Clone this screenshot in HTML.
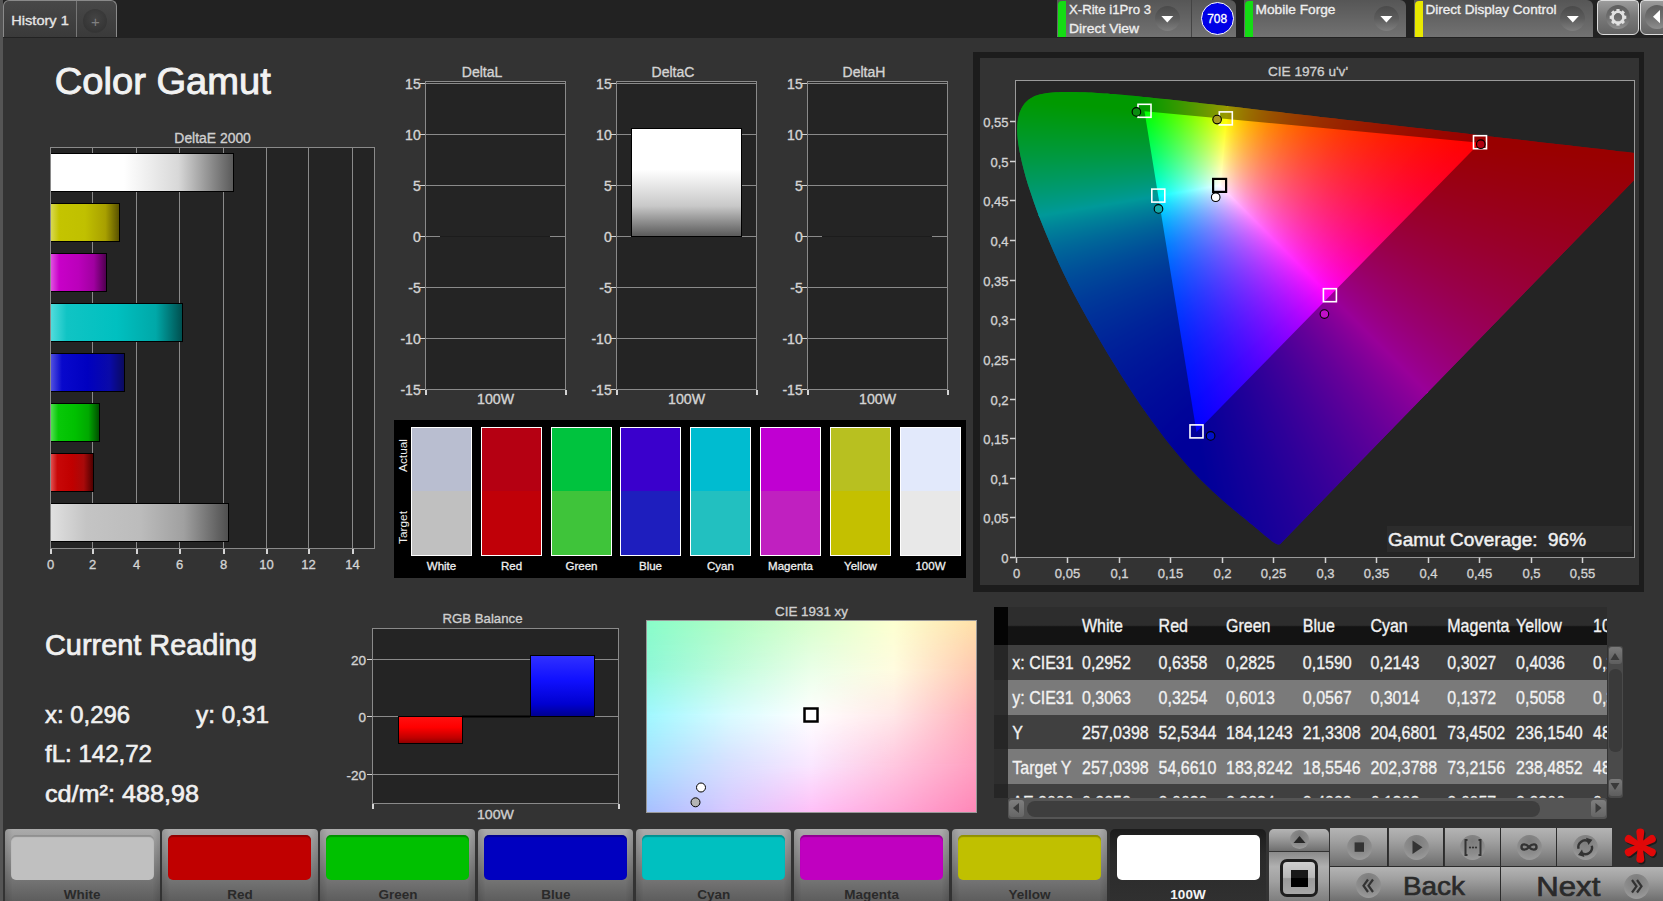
<!DOCTYPE html><html><head><meta charset="utf-8"><title>Color Gamut</title><style>html,body{margin:0;padding:0;width:1663px;height:901px;overflow:hidden;background:#333;}body{position:relative;font-family:"Liberation Sans",sans-serif;}svg text{font-family:"Liberation Sans",sans-serif;}</style></head><body><div style="position:absolute;left:0px;top:0px;width:1663px;height:38px;background:#222;"></div>
<div style="position:absolute;left:0px;top:38px;width:1663px;height:863px;background:#333;"></div>
<div style="position:absolute;left:0px;top:0px;width:3px;height:901px;background:#555;"></div>
<div style="position:absolute;left:3px;top:0px;width:114px;height:37px;background:linear-gradient(#484848,#3a3a3a);border:1px solid #8a8a8a;border-bottom:none;border-radius:6px 6px 0 0;box-sizing:border-box;"></div>
<div style="position:absolute;left:76px;top:1px;width:1px;height:36px;background:#777;"></div>
<div style="position:absolute;left:83px;top:9px;width:24px;height:24px;border-radius:50%;background:radial-gradient(circle at 50% 40%,#444,#353535 70%,#3a3a3a);"></div>
<div style="position:absolute;left:1057px;top:0px;width:179px;height:37px;background:linear-gradient(#565656,#727272);border-radius:0 6px 0 0;"></div>
<div style="position:absolute;left:1057.8px;top:1px;width:8px;height:36px;background:#14dc14;border-radius:4px 0 0 0;"></div>
<div style="position:absolute;left:1154.8px;top:5.5px;width:25px;height:25px;border-radius:50%;background:linear-gradient(#4a4a4a,#5c5c5c 50%,#7e7e7e);"></div>
<div style="position:absolute;left:1191px;top:0px;width:1px;height:37px;background:#444;"></div>
<div style="position:absolute;left:1200.5px;top:2px;width:33px;height:33px;border-radius:50%;background:#0000e6;border:1.5px solid #fff;box-sizing:border-box;"></div>
<div style="position:absolute;left:1244px;top:0px;width:162px;height:37px;background:linear-gradient(#565656,#727272);border-radius:0 6px 0 0;"></div>
<div style="position:absolute;left:1244.8px;top:1px;width:8px;height:36px;background:#14dc14;border-radius:4px 0 0 0;"></div>
<div style="position:absolute;left:1373.9px;top:5.5px;width:25px;height:25px;border-radius:50%;background:linear-gradient(#4a4a4a,#5c5c5c 50%,#7e7e7e);"></div>
<div style="position:absolute;left:1414px;top:0px;width:179px;height:37px;background:linear-gradient(#565656,#727272);border-radius:0 6px 0 0;"></div>
<div style="position:absolute;left:1414.8px;top:1px;width:8px;height:36px;background:#e8e800;border-radius:4px 0 0 0;"></div>
<div style="position:absolute;left:1560.3px;top:5.5px;width:25px;height:25px;border-radius:50%;background:linear-gradient(#4a4a4a,#5c5c5c 50%,#7e7e7e);"></div>
<div style="position:absolute;left:1597px;top:0px;width:42px;height:35px;background:linear-gradient(#9c9c9c 0%,#7a7a7a 45%,#646464 100%);border:1.5px solid #dcdcdc;box-sizing:border-box;border-radius:4px 4px 6px 6px;"></div>
<div style="position:absolute;left:1640px;top:0px;width:26px;height:35px;background:linear-gradient(#9c9c9c 0%,#7a7a7a 45%,#646464 100%);border:1.5px solid #dcdcdc;box-sizing:border-box;border-radius:4px 0 0 6px;"></div>
<div style="position:absolute;left:1606px;top:5.3px;width:24px;height:24px;border-radius:50%;background:linear-gradient(#5e5e5e,#6e6e6e 50%,#8e8e8e);"></div>
<div style="position:absolute;left:1644.7px;top:5.3px;width:24px;height:24px;border-radius:50%;background:linear-gradient(#5e5e5e,#6e6e6e 50%,#8e8e8e);"></div>
<div style="position:absolute;left:50px;top:147px;width:325px;height:402px;background:#242424;border:1px solid #8a8a8a;box-sizing:border-box;"></div>
<div style="position:absolute;left:50px;top:549px;width:1.6px;height:5px;background:#d4d4d4;"></div>
<div style="position:absolute;left:92px;top:147px;width:1px;height:402px;background:#8a8a8a;"></div>
<div style="position:absolute;left:92px;top:549px;width:1.6px;height:5px;background:#d4d4d4;"></div>
<div style="position:absolute;left:136px;top:147px;width:1px;height:402px;background:#8a8a8a;"></div>
<div style="position:absolute;left:136px;top:549px;width:1.6px;height:5px;background:#d4d4d4;"></div>
<div style="position:absolute;left:179px;top:147px;width:1px;height:402px;background:#8a8a8a;"></div>
<div style="position:absolute;left:179px;top:549px;width:1.6px;height:5px;background:#d4d4d4;"></div>
<div style="position:absolute;left:223px;top:147px;width:1px;height:402px;background:#8a8a8a;"></div>
<div style="position:absolute;left:223px;top:549px;width:1.6px;height:5px;background:#d4d4d4;"></div>
<div style="position:absolute;left:266px;top:147px;width:1px;height:402px;background:#8a8a8a;"></div>
<div style="position:absolute;left:266px;top:549px;width:1.6px;height:5px;background:#d4d4d4;"></div>
<div style="position:absolute;left:308px;top:147px;width:1px;height:402px;background:#8a8a8a;"></div>
<div style="position:absolute;left:308px;top:549px;width:1.6px;height:5px;background:#d4d4d4;"></div>
<div style="position:absolute;left:352px;top:147px;width:1px;height:402px;background:#8a8a8a;"></div>
<div style="position:absolute;left:352px;top:549px;width:1.6px;height:5px;background:#d4d4d4;"></div>
<div style="position:absolute;left:51px;top:153.2px;width:183.4px;height:38.5px;background:linear-gradient(90deg,#fff 0%,#fff 40%,#d8d8d8 70%,#5a5a5a 100%);border:1px solid #000;border-left:none;box-sizing:border-box;"></div>
<div style="position:absolute;left:51px;top:203.2px;width:69.4px;height:38.5px;background:linear-gradient(90deg,#d8d850 0%,#c4c400 12%,#c0c000 50%,#a8a000 80%,#5a5200 100%);border:1px solid #000;border-left:none;box-sizing:border-box;"></div>
<div style="position:absolute;left:51px;top:253.2px;width:55.5px;height:38.5px;background:linear-gradient(90deg,#e050e0 0%,#c800c8 15%,#bb00bb 50%,#a000a0 78%,#500050 100%);border:1px solid #000;border-left:none;box-sizing:border-box;"></div>
<div style="position:absolute;left:51px;top:303.2px;width:132.2px;height:38.5px;background:linear-gradient(90deg,#50dcdc 0%,#10c4c4 12%,#00c0c0 50%,#00a8a8 80%,#005050 100%);border:1px solid #000;border-left:none;box-sizing:border-box;"></div>
<div style="position:absolute;left:51px;top:353.2px;width:73.6px;height:38.5px;background:linear-gradient(90deg,#5050e0 0%,#0808cc 15%,#0000c0 50%,#0a0aa8 80%,#0a0a60 100%);border:1px solid #000;border-left:none;box-sizing:border-box;"></div>
<div style="position:absolute;left:51px;top:403.2px;width:49.099999999999994px;height:38.5px;background:linear-gradient(90deg,#50e050 0%,#08c808 15%,#00c000 50%,#00a800 78%,#005000 100%);border:1px solid #000;border-left:none;box-sizing:border-box;"></div>
<div style="position:absolute;left:51px;top:453.2px;width:43.3px;height:38.5px;background:linear-gradient(90deg,#e05050 0%,#c80808 15%,#c00000 50%,#a80a0a 78%,#500000 100%);border:1px solid #000;border-left:none;box-sizing:border-box;"></div>
<div style="position:absolute;left:51px;top:503.2px;width:178.0px;height:38.5px;background:linear-gradient(90deg,#e0e0e0 0%,#c4c4c4 20%,#bcbcbc 50%,#a0a0a0 75%,#505050 100%);border:1px solid #000;border-left:none;box-sizing:border-box;"></div>
<div style="position:absolute;left:425px;top:81px;width:141px;height:309px;background:#242424;border:1px solid #8a8a8a;box-sizing:border-box;"></div>
<div style="position:absolute;left:425px;top:83px;width:140px;height:1px;background:#8a8a8a;"></div>
<div style="position:absolute;left:420px;top:82.7px;width:5px;height:1.6px;background:#d4d4d4;"></div>
<div style="position:absolute;left:425px;top:134px;width:140px;height:1px;background:#8a8a8a;"></div>
<div style="position:absolute;left:420px;top:133.7px;width:5px;height:1.6px;background:#d4d4d4;"></div>
<div style="position:absolute;left:425px;top:185px;width:140px;height:1px;background:#8a8a8a;"></div>
<div style="position:absolute;left:420px;top:184.7px;width:5px;height:1.6px;background:#d4d4d4;"></div>
<div style="position:absolute;left:425px;top:236px;width:140px;height:1px;background:#8a8a8a;"></div>
<div style="position:absolute;left:420px;top:235.7px;width:5px;height:1.6px;background:#d4d4d4;"></div>
<div style="position:absolute;left:425px;top:287px;width:140px;height:1px;background:#8a8a8a;"></div>
<div style="position:absolute;left:420px;top:286.7px;width:5px;height:1.6px;background:#d4d4d4;"></div>
<div style="position:absolute;left:425px;top:338px;width:140px;height:1px;background:#8a8a8a;"></div>
<div style="position:absolute;left:420px;top:337.7px;width:5px;height:1.6px;background:#d4d4d4;"></div>
<div style="position:absolute;left:420px;top:388.7px;width:5px;height:1.6px;background:#d4d4d4;"></div>
<div style="position:absolute;left:425px;top:390px;width:1.6px;height:5px;background:#d4d4d4;"></div>
<div style="position:absolute;left:565px;top:390px;width:1.6px;height:5px;background:#d4d4d4;"></div>
<div style="position:absolute;left:440px;top:236px;width:110px;height:1.3px;background:#1c1c1c;"></div>
<div style="position:absolute;left:616px;top:81px;width:141px;height:309px;background:#242424;border:1px solid #8a8a8a;box-sizing:border-box;"></div>
<div style="position:absolute;left:616px;top:83px;width:140px;height:1px;background:#8a8a8a;"></div>
<div style="position:absolute;left:611px;top:82.7px;width:5px;height:1.6px;background:#d4d4d4;"></div>
<div style="position:absolute;left:616px;top:134px;width:140px;height:1px;background:#8a8a8a;"></div>
<div style="position:absolute;left:611px;top:133.7px;width:5px;height:1.6px;background:#d4d4d4;"></div>
<div style="position:absolute;left:616px;top:185px;width:140px;height:1px;background:#8a8a8a;"></div>
<div style="position:absolute;left:611px;top:184.7px;width:5px;height:1.6px;background:#d4d4d4;"></div>
<div style="position:absolute;left:616px;top:236px;width:140px;height:1px;background:#8a8a8a;"></div>
<div style="position:absolute;left:611px;top:235.7px;width:5px;height:1.6px;background:#d4d4d4;"></div>
<div style="position:absolute;left:616px;top:287px;width:140px;height:1px;background:#8a8a8a;"></div>
<div style="position:absolute;left:611px;top:286.7px;width:5px;height:1.6px;background:#d4d4d4;"></div>
<div style="position:absolute;left:616px;top:338px;width:140px;height:1px;background:#8a8a8a;"></div>
<div style="position:absolute;left:611px;top:337.7px;width:5px;height:1.6px;background:#d4d4d4;"></div>
<div style="position:absolute;left:611px;top:388.7px;width:5px;height:1.6px;background:#d4d4d4;"></div>
<div style="position:absolute;left:616px;top:390px;width:1.6px;height:5px;background:#d4d4d4;"></div>
<div style="position:absolute;left:756px;top:390px;width:1.6px;height:5px;background:#d4d4d4;"></div>
<div style="position:absolute;left:630.5px;top:128px;width:111.5px;height:109px;background:linear-gradient(#fff 0%,#fff 38%,#c8c8c8 72%,#5a5a5a 100%);border:1.8px solid #000;box-sizing:border-box;"></div>
<div style="position:absolute;left:807px;top:81px;width:141px;height:309px;background:#242424;border:1px solid #8a8a8a;box-sizing:border-box;"></div>
<div style="position:absolute;left:807px;top:83px;width:140px;height:1px;background:#8a8a8a;"></div>
<div style="position:absolute;left:802px;top:82.7px;width:5px;height:1.6px;background:#d4d4d4;"></div>
<div style="position:absolute;left:807px;top:134px;width:140px;height:1px;background:#8a8a8a;"></div>
<div style="position:absolute;left:802px;top:133.7px;width:5px;height:1.6px;background:#d4d4d4;"></div>
<div style="position:absolute;left:807px;top:185px;width:140px;height:1px;background:#8a8a8a;"></div>
<div style="position:absolute;left:802px;top:184.7px;width:5px;height:1.6px;background:#d4d4d4;"></div>
<div style="position:absolute;left:807px;top:236px;width:140px;height:1px;background:#8a8a8a;"></div>
<div style="position:absolute;left:802px;top:235.7px;width:5px;height:1.6px;background:#d4d4d4;"></div>
<div style="position:absolute;left:807px;top:287px;width:140px;height:1px;background:#8a8a8a;"></div>
<div style="position:absolute;left:802px;top:286.7px;width:5px;height:1.6px;background:#d4d4d4;"></div>
<div style="position:absolute;left:807px;top:338px;width:140px;height:1px;background:#8a8a8a;"></div>
<div style="position:absolute;left:802px;top:337.7px;width:5px;height:1.6px;background:#d4d4d4;"></div>
<div style="position:absolute;left:802px;top:388.7px;width:5px;height:1.6px;background:#d4d4d4;"></div>
<div style="position:absolute;left:807px;top:390px;width:1.6px;height:5px;background:#d4d4d4;"></div>
<div style="position:absolute;left:947px;top:390px;width:1.6px;height:5px;background:#d4d4d4;"></div>
<div style="position:absolute;left:822px;top:236px;width:110px;height:1.3px;background:#1c1c1c;"></div>
<div style="position:absolute;left:394px;top:420px;width:572px;height:158px;background:#000;"></div>
<div style="position:absolute;left:411px;top:427px;width:61px;height:129px;border:1.5px solid #fff;box-sizing:border-box;background:linear-gradient(#b9bed0 0%,#b9bed0 50%,#c0c0c0 50%,#c0c0c0 100%);"></div>
<div style="position:absolute;left:481px;top:427px;width:61px;height:129px;border:1.5px solid #fff;box-sizing:border-box;background:linear-gradient(#b50012 0%,#b50012 50%,#c00008 50%,#c00008 100%);"></div>
<div style="position:absolute;left:551px;top:427px;width:61px;height:129px;border:1.5px solid #fff;box-sizing:border-box;background:linear-gradient(#00c33e 0%,#00c33e 50%,#3fc43a 50%,#3fc43a 100%);"></div>
<div style="position:absolute;left:620px;top:427px;width:61px;height:129px;border:1.5px solid #fff;box-sizing:border-box;background:linear-gradient(#3a00cc 0%,#3a00cc 50%,#1e1ebe 50%,#1e1ebe 100%);"></div>
<div style="position:absolute;left:690px;top:427px;width:61px;height:129px;border:1.5px solid #fff;box-sizing:border-box;background:linear-gradient(#00bcd0 0%,#00bcd0 50%,#22c0c0 50%,#22c0c0 100%);"></div>
<div style="position:absolute;left:760px;top:427px;width:61px;height:129px;border:1.5px solid #fff;box-sizing:border-box;background:linear-gradient(#c000d2 0%,#c000d2 50%,#c020c0 50%,#c020c0 100%);"></div>
<div style="position:absolute;left:830px;top:427px;width:61px;height:129px;border:1.5px solid #fff;box-sizing:border-box;background:linear-gradient(#b8c020 0%,#b8c020 50%,#c4c000 50%,#c4c000 100%);"></div>
<div style="position:absolute;left:900px;top:427px;width:61px;height:129px;border:1.5px solid #fff;box-sizing:border-box;background:linear-gradient(#e2e9fb 0%,#e2e9fb 50%,#e8e8e8 50%,#e8e8e8 100%);"></div>
<div style="position:absolute;left:973px;top:52px;width:671px;height:540px;background:#1c1c1c;"></div>
<div style="position:absolute;left:979.5px;top:58px;width:659px;height:527px;background:#333;"></div>
<div style="position:absolute;left:1015px;top:80px;width:620px;height:478px;background:#242424;"></div>
<div style="position:absolute;left:1015px;top:80px;width:620px;height:478px;overflow:hidden;"><div style="position:absolute;left:0;top:0;width:620px;height:478px;clip-path:polygon(265.3px 463.9px,265.3px 463.9px,265.2px 463.9px,265.1px 464.0px,265.0px 464.1px,264.9px 464.1px,264.8px 464.2px,264.7px 464.2px,264.5px 464.3px,264.4px 464.3px,264.2px 464.4px,264.0px 464.4px,263.8px 464.4px,263.6px 464.4px,263.3px 464.4px,263.0px 464.4px,262.6px 464.3px,262.1px 464.2px,261.6px 464.0px,261.1px 463.8px,260.6px 463.6px,260.1px 463.3px,259.6px 463.0px,259.1px 462.7px,258.5px 462.3px,257.9px 461.8px,257.3px 461.4px,256.6px 460.9px,255.9px 460.3px,255.1px 459.7px,254.3px 459.1px,253.4px 458.3px,252.4px 457.6px,251.4px 456.7px,250.2px 455.8px,249.1px 454.9px,247.9px 453.8px,246.7px 452.8px,245.3px 451.7px,244.0px 450.5px,242.5px 449.3px,241.0px 448.0px,239.5px 446.7px,237.8px 445.3px,236.1px 443.9px,234.2px 442.4px,232.3px 440.8px,230.2px 439.1px,228.0px 437.3px,225.7px 435.4px,223.3px 433.5px,220.9px 431.5px,218.4px 429.4px,215.8px 427.2px,213.1px 425.0px,210.2px 422.5px,207.3px 419.9px,204.2px 417.2px,201.0px 414.3px,197.6px 411.3px,194.2px 408.0px,190.6px 404.5px,187.0px 401.0px,183.2px 397.2px,179.2px 393.0px,174.8px 388.3px,170.2px 383.0px,165.3px 377.3px,160.1px 371.1px,154.7px 364.5px,149.2px 357.4px,143.5px 349.8px,137.5px 341.8px,131.4px 333.3px,125.2px 324.4px,118.9px 315.1px,112.5px 305.3px,105.9px 294.9px,99.3px 284.3px,92.6px 273.4px,86.1px 262.4px,79.6px 251.2px,73.0px 239.8px,66.6px 228.3px,60.4px 216.8px,54.5px 205.5px,49.0px 194.2px,43.7px 183.0px,38.8px 171.9px,34.1px 161.1px,29.8px 150.8px,25.8px 140.8px,22.1px 131.2px,18.8px 121.9px,15.8px 113.0px,13.0px 104.7px,10.7px 96.9px,8.7px 89.6px,7.0px 82.8px,5.6px 76.4px,4.4px 70.4px,3.5px 64.9px,2.8px 59.8px,2.4px 55.1px,2.2px 50.7px,2.3px 46.6px,2.5px 42.7px,3.0px 39.2px,3.7px 36.0px,4.5px 33.0px,5.6px 30.2px,6.8px 27.7px,8.2px 25.4px,9.8px 23.3px,11.6px 21.5px,13.5px 19.8px,15.4px 18.4px,17.6px 17.2px,19.8px 16.1px,22.2px 15.3px,24.6px 14.5px,27.1px 13.9px,29.7px 13.4px,32.4px 13.1px,35.1px 12.8px,37.9px 12.5px,40.7px 12.3px,43.6px 12.2px,46.5px 12.1px,49.4px 12.1px,52.4px 12.1px,55.3px 12.0px,58.2px 12.1px,61.1px 12.1px,64.1px 12.2px,67.1px 12.2px,70.1px 12.3px,73.1px 12.5px,76.2px 12.6px,79.2px 12.8px,82.4px 13.0px,85.6px 13.2px,88.9px 13.4px,92.2px 13.6px,95.5px 13.9px,98.9px 14.1px,102.4px 14.4px,105.9px 14.7px,109.5px 15.1px,113.2px 15.4px,116.9px 15.8px,120.7px 16.1px,124.5px 16.5px,128.5px 16.9px,132.5px 17.3px,136.6px 17.8px,140.8px 18.2px,145.1px 18.7px,149.5px 19.1px,153.9px 19.6px,158.5px 20.1px,163.1px 20.6px,167.9px 21.1px,172.7px 21.7px,177.6px 22.2px,182.7px 22.8px,187.8px 23.4px,193.1px 24.0px,198.4px 24.6px,203.9px 25.2px,209.5px 25.8px,215.1px 26.5px,220.9px 27.1px,226.8px 27.8px,232.8px 28.5px,238.9px 29.2px,245.1px 29.9px,251.4px 30.7px,257.9px 31.4px,264.4px 32.1px,271.0px 32.9px,277.7px 33.7px,284.6px 34.5px,291.5px 35.3px,298.5px 36.1px,305.6px 36.9px,312.8px 37.7px,320.1px 38.5px,327.5px 39.4px,334.9px 40.2px,342.3px 41.1px,349.8px 42.0px,357.3px 42.8px,364.9px 43.7px,372.4px 44.6px,379.9px 45.4px,386.8px 46.2px,393.1px 47.0px,399.6px 47.7px,407.1px 48.6px,416.4px 49.6px,428.2px 51.0px,441.9px 52.6px,456.6px 54.2px,471.0px 55.9px,484.0px 57.4px,495.8px 58.7px,506.9px 60.0px,517.4px 61.2px,527.4px 62.4px,536.7px 63.5px,545.3px 64.4px,553.2px 65.3px,560.5px 66.2px,567.4px 67.0px,574.0px 67.7px,580.3px 68.5px,586.1px 69.1px,591.5px 69.8px,596.6px 70.3px,601.3px 70.9px,605.4px 71.4px,608.9px 71.8px,612.2px 72.1px,615.5px 72.5px,619.3px 72.9px,624.0px 73.5px,629.5px 74.1px,634.9px 74.7px,639.6px 75.3px,642.9px 75.7px);"><div style="position:absolute;left:0;top:0;width:620px;height:478px;clip-path:polygon(213.5px -2.0px,622.0px -2.0px,622.0px 480.0px,579.0px 480.0px,203.3px 106.4px);background:conic-gradient(from 3.58deg at 181.5px 351.9px,rgb(0,255,0) 0.00deg,rgb(0,255,0) 0.41deg,rgb(0,255,0) 0.81deg,rgb(0,255,0) 1.22deg,rgb(0,255,0) 1.62deg,rgb(0,249,0) 2.03deg,rgb(0,241,0) 2.43deg,rgb(0,233,0) 2.84deg,rgb(0,225,0) 3.24deg,rgb(0,217,0) 3.65deg,rgb(0,210,0) 4.05deg,rgb(0,204,0) 4.46deg,rgb(0,197,0) 4.86deg,rgb(0,191,0) 5.27deg,rgb(0,185,0) 5.67deg,rgb(0,179,0) 6.08deg,rgb(0,174,0) 6.49deg,rgb(0,169,0) 6.89deg,rgb(0,164,0) 7.30deg,rgb(0,159,0) 7.70deg,rgb(0,154,0) 8.11deg,rgb(0,150,0) 8.51deg,rgb(0,146,0) 8.92deg,rgb(0,141,0) 9.32deg,rgb(0,137,0) 9.73deg,rgb(0,133,0) 10.13deg,rgb(0,130,0) 10.54deg,rgb(0,126,0) 10.94deg,rgb(0,123,0) 11.35deg,rgb(0,119,0) 11.75deg,rgb(0,116,0) 12.16deg,rgb(0,113,0) 12.57deg,rgb(0,109,0) 12.97deg,rgb(0,106,0) 13.38deg,rgb(0,104,0) 13.78deg,rgb(0,101,0) 14.19deg,rgb(0,98,0) 14.59deg,rgb(0,95,0) 15.00deg,rgb(0,93,0) 15.40deg,rgb(0,90,0) 15.81deg,rgb(0,88,0) 16.21deg,rgb(0,85,0) 16.62deg,rgb(0,83,0) 17.02deg,rgb(0,80,0) 17.43deg,rgb(0,78,0) 17.83deg,rgb(0,76,0) 18.24deg,rgb(0,74,0) 18.64deg,rgb(0,72,0) 19.05deg,rgb(0,70,0) 19.46deg,rgb(0,68,0) 19.86deg,rgb(0,66,0) 20.27deg,rgb(0,64,0) 20.67deg,rgb(0,62,0) 21.08deg,rgb(0,60,0) 21.48deg,rgb(0,58,0) 21.89deg,rgb(0,56,0) 22.29deg,rgb(0,55,0) 22.70deg,rgb(0,53,0) 23.10deg,rgb(0,51,0) 23.51deg,rgb(0,50,0) 23.91deg,rgb(0,48,0) 24.32deg,rgb(0,46,0) 24.72deg,rgb(0,45,0) 25.13deg,rgb(0,43,0) 25.54deg,rgb(0,42,0) 25.94deg,rgb(0,40,0) 26.35deg,rgb(0,39,0) 26.75deg,rgb(0,38,0) 27.16deg,rgb(0,36,0) 27.56deg,rgb(0,35,0) 27.97deg,rgb(0,33,0) 28.37deg,rgb(0,32,0) 28.78deg,rgb(0,31,0) 29.18deg,rgb(0,30,0) 29.59deg,rgb(0,28,0) 29.99deg,rgb(0,27,0) 30.40deg,rgb(0,26,0) 30.80deg,rgb(0,25,0) 31.21deg,rgb(0,23,0) 31.62deg,rgb(0,22,0) 32.02deg,rgb(0,21,0) 32.43deg,rgb(0,20,0) 32.83deg,rgb(0,19,0) 33.24deg,rgb(0,18,0) 33.64deg,rgb(0,17,0) 34.05deg,rgb(0,15,0) 34.45deg,rgb(0,14,0) 34.86deg,rgb(0,13,0) 35.26deg,rgb(0,12,0) 35.67deg,rgb(0,11,0) 36.07deg,rgb(0,10,0) 36.48deg,rgb(0,9,0) 36.88deg,rgb(0,8,0) 37.29deg,rgb(0,7,0) 37.70deg,rgb(0,6,0) 38.10deg,rgb(0,5,0) 38.51deg,rgb(0,4,0) 38.91deg,rgb(0,3,0) 39.32deg,rgb(0,3,0) 39.72deg,rgb(0,2,0) 40.13deg,rgb(0,1,0) 40.53deg,rgb(0,0,0) 40.94deg,rgb(0,0,0) 41.34deg,rgb(0,0,0) 41.75deg,rgb(0,0,0) 42.15deg,rgb(0,0,0) 42.56deg,rgb(0,0,0) 42.96deg,rgb(0,0,0) 43.37deg,rgb(0,0,0) 43.77deg,rgb(0,0,0) 44.18deg,rgb(0,0,0) 44.59deg,rgb(0,0,0) 44.99deg,rgb(0,0,0) 45.40deg,rgb(0,0,0) 45.80deg,rgb(0,0,0) 46.21deg,rgb(0,0,0) 46.61deg,rgb(0,0,0) 47.02deg,rgb(0,0,0) 47.42deg,rgb(0,0,0) 47.83deg,rgb(0,0,0) 48.23deg,rgb(0,0,0) 48.64deg,rgb(0,0,0) 49.04deg,rgb(0,0,0) 49.45deg,rgb(0,0,0) 49.85deg,rgb(0,0,0) 50.26deg,rgb(0,0,0) 50.67deg,rgb(0,0,0) 51.07deg,rgb(0,0,0) 51.48deg,rgb(0,0,0) 51.88deg,rgb(0,0,0) 52.29deg,rgb(0,0,0) 52.69deg,rgb(0,0,0) 53.10deg,rgb(0,0,0) 53.50deg,rgb(0,0,0) 53.91deg,rgb(0,0,0) 54.31deg,rgb(0,0,0) 54.72deg,rgb(0,0,0) 55.12deg,rgb(0,0,0) 55.53deg,rgb(0,0,0) 55.93deg,rgb(0,0,0) 56.34deg,rgb(0,0,0) 56.75deg,rgb(0,0,0) 57.15deg,rgb(0,0,0) 57.56deg,rgb(0,0,0) 57.96deg,rgb(0,0,0) 58.37deg,rgb(0,0,0) 58.77deg,rgb(0,0,0) 59.18deg,rgb(0,0,0) 59.58deg,rgb(0,0,0) 59.99deg,rgb(0,0,0) 60.39deg,rgb(0,0,0) 60.80deg,rgb(0,0,0) 61.20deg,rgb(0,0,0) 61.61deg,rgb(0,0,0) 62.01deg,rgb(0,0,0) 62.42deg,rgb(0,0,0) 62.83deg,rgb(0,0,0) 63.23deg,rgb(0,0,0) 63.64deg,rgb(0,0,0) 64.04deg,rgb(0,0,0) 64.45deg,rgb(0,0,0) 64.85deg,rgb(0,0,0) 65.26deg,rgb(0,0,0) 65.66deg,rgb(0,0,0) 66.07deg,rgb(0,0,0) 66.47deg,rgb(0,0,0) 66.88deg,rgb(0,0,0) 67.28deg,rgb(0,0,0) 67.69deg,rgb(0,0,0) 68.09deg,rgb(0,0,0) 68.50deg,rgb(0,0,0) 68.91deg,rgb(0,0,0) 69.31deg,rgb(0,0,0) 69.72deg,rgb(0,0,0) 70.12deg,rgb(0,0,0) 70.53deg,rgb(0,0,0) 70.93deg,rgb(0,0,0) 71.34deg,rgb(0,0,0) 71.74deg,rgb(0,0,0) 72.15deg,rgb(0,0,0) 72.55deg,rgb(0,0,0) 72.96deg,rgb(0,0,0) 73.36deg,rgb(0,0,0) 73.77deg,rgb(0,0,0) 74.17deg,rgb(0,0,0) 74.58deg,rgb(0,0,0) 74.98deg,rgb(0,0,0) 75.39deg,rgb(0,0,0) 75.80deg,rgb(0,0,0) 76.20deg,rgb(0,0,0) 76.61deg,rgb(0,0,0) 77.01deg,rgb(0,0,0) 77.42deg,rgb(0,0,0) 77.82deg,rgb(0,0,0) 78.23deg,rgb(0,0,0) 78.63deg,rgb(0,0,0) 79.04deg,rgb(0,0,0) 79.44deg,rgb(0,0,0) 79.85deg,rgb(0,0,0) 80.25deg,rgb(0,0,0) 80.66deg,rgb(0,0,0) 81.06deg,rgb(0,0,0) 81.47deg,rgb(0,0,0) 81.88deg,rgb(0,0,0) 82.28deg,rgb(0,0,0) 82.69deg,rgb(0,0,0) 83.09deg,rgb(0,0,0) 83.50deg,rgb(0,0,0) 83.90deg,rgb(0,0,0) 84.31deg,rgb(0,0,0) 84.71deg,rgb(0,0,0) 85.12deg,rgb(0,0,0) 85.52deg,rgb(0,0,0) 85.93deg,rgb(0,0,0) 86.33deg,rgb(0,0,0) 86.74deg,rgb(0,0,0) 87.14deg,rgb(0,0,0) 87.55deg,rgb(0,0,0) 87.96deg,rgb(0,0,0) 88.36deg,rgb(0,0,0) 88.77deg,rgb(0,0,0) 89.17deg,rgb(0,0,0) 89.58deg,rgb(0,0,0) 89.98deg,rgb(0,0,0) 90.39deg,rgb(0,0,0) 90.79deg,rgb(0,0,0) 91.20deg,rgb(0,0,0) 91.60deg,rgb(0,0,0) 92.01deg,rgb(0,0,0) 92.41deg,rgb(0,0,0) 92.82deg,rgb(0,0,0) 93.22deg,rgb(0,0,0) 93.63deg,rgb(0,0,0) 94.04deg,rgb(0,0,0) 94.44deg,rgb(0,0,0) 94.85deg,rgb(0,0,0) 95.25deg,rgb(0,0,0) 95.66deg,rgb(0,0,0) 96.06deg,rgb(0,0,0) 96.47deg,rgb(0,0,0) 96.87deg,rgb(0,0,0) 97.28deg,rgb(0,0,0) 97.68deg,rgb(0,0,0) 98.09deg,rgb(0,0,0) 98.49deg,rgb(0,0,0) 98.90deg,rgb(0,0,0) 99.30deg,rgb(0,0,0) 99.71deg,rgb(0,0,0) 100.12deg,rgb(0,0,0) 100.52deg,rgb(0,0,0) 100.93deg,rgb(0,0,0) 101.33deg,rgb(0,0,0) 101.74deg,rgb(0,0,0) 102.14deg,rgb(0,0,0) 102.55deg,rgb(0,0,0) 102.95deg,rgb(0,0,0) 103.36deg,rgb(0,0,0) 103.76deg,rgb(0,0,0) 104.17deg,rgb(0,0,0) 104.57deg,rgb(0,0,0) 104.98deg,rgb(0,0,0) 105.38deg,rgb(0,0,0) 105.79deg),conic-gradient(from 66.88deg at 129.5px 31.3px,rgb(0,0,0) 0.00deg,rgb(0,0,0) 0.34deg,rgb(0,0,0) 0.69deg,rgb(0,0,0) 1.03deg,rgb(0,0,0) 1.37deg,rgb(0,0,0) 1.72deg,rgb(0,0,0) 2.06deg,rgb(0,0,0) 2.41deg,rgb(0,0,0) 2.75deg,rgb(0,0,0) 3.09deg,rgb(0,0,0) 3.44deg,rgb(0,0,0) 3.78deg,rgb(0,0,0) 4.12deg,rgb(0,0,0) 4.47deg,rgb(0,0,0) 4.81deg,rgb(0,0,0) 5.16deg,rgb(0,0,0) 5.50deg,rgb(0,0,0) 5.84deg,rgb(0,0,0) 6.19deg,rgb(0,0,0) 6.53deg,rgb(0,0,0) 6.87deg,rgb(0,0,0) 7.22deg,rgb(0,0,0) 7.56deg,rgb(0,0,0) 7.91deg,rgb(0,0,0) 8.25deg,rgb(0,0,0) 8.59deg,rgb(0,0,0) 8.94deg,rgb(0,0,0) 9.28deg,rgb(0,0,0) 9.62deg,rgb(0,0,0) 9.97deg,rgb(0,0,0) 10.31deg,rgb(0,0,0) 10.66deg,rgb(0,0,0) 11.00deg,rgb(0,0,0) 11.34deg,rgb(0,0,0) 11.69deg,rgb(0,0,0) 12.03deg,rgb(0,0,0) 12.37deg,rgb(0,0,0) 12.72deg,rgb(0,0,0) 13.06deg,rgb(0,0,0) 13.41deg,rgb(0,0,0) 13.75deg,rgb(0,0,0) 14.09deg,rgb(0,0,0) 14.44deg,rgb(0,0,0) 14.78deg,rgb(0,0,0) 15.12deg,rgb(0,0,0) 15.47deg,rgb(0,0,0) 15.81deg,rgb(0,0,0) 16.16deg,rgb(0,0,0) 16.50deg,rgb(0,0,0) 16.84deg,rgb(0,0,0) 17.19deg,rgb(0,0,0) 17.53deg,rgb(0,0,0) 17.87deg,rgb(0,0,0) 18.22deg,rgb(0,0,0) 18.56deg,rgb(0,0,0) 18.91deg,rgb(0,0,0) 19.25deg,rgb(0,0,0) 19.59deg,rgb(0,0,0) 19.94deg,rgb(0,0,0) 20.28deg,rgb(0,0,0) 20.62deg,rgb(0,0,0) 20.97deg,rgb(0,0,0) 21.31deg,rgb(0,0,0) 21.66deg,rgb(0,0,0) 22.00deg,rgb(0,0,0) 22.34deg,rgb(0,0,0) 22.69deg,rgb(0,0,0) 23.03deg,rgb(0,0,0) 23.37deg,rgb(0,0,0) 23.72deg,rgb(0,0,0) 24.06deg,rgb(0,0,0) 24.41deg,rgb(0,0,0) 24.75deg,rgb(0,0,0) 25.09deg,rgb(0,0,0) 25.44deg,rgb(0,0,0) 25.78deg,rgb(0,0,0) 26.12deg,rgb(0,0,0) 26.47deg,rgb(0,0,0) 26.81deg,rgb(0,0,0) 27.16deg,rgb(0,0,0) 27.50deg,rgb(0,0,0) 27.84deg,rgb(0,0,0) 28.19deg,rgb(0,0,0) 28.53deg,rgb(0,0,2) 28.87deg,rgb(0,0,3) 29.22deg,rgb(0,0,5) 29.56deg,rgb(0,0,6) 29.91deg,rgb(0,0,8) 30.25deg,rgb(0,0,9) 30.59deg,rgb(0,0,11) 30.94deg,rgb(0,0,12) 31.28deg,rgb(0,0,14) 31.62deg,rgb(0,0,15) 31.97deg,rgb(0,0,17) 32.31deg,rgb(0,0,18) 32.66deg,rgb(0,0,20) 33.00deg,rgb(0,0,21) 33.34deg,rgb(0,0,23) 33.69deg,rgb(0,0,24) 34.03deg,rgb(0,0,26) 34.37deg,rgb(0,0,27) 34.72deg,rgb(0,0,29) 35.06deg,rgb(0,0,31) 35.41deg,rgb(0,0,32) 35.75deg,rgb(0,0,34) 36.09deg,rgb(0,0,35) 36.44deg,rgb(0,0,37) 36.78deg,rgb(0,0,39) 37.12deg,rgb(0,0,40) 37.47deg,rgb(0,0,42) 37.81deg,rgb(0,0,43) 38.16deg,rgb(0,0,45) 38.50deg,rgb(0,0,47) 38.84deg,rgb(0,0,48) 39.19deg,rgb(0,0,50) 39.53deg,rgb(0,0,52) 39.87deg,rgb(0,0,53) 40.22deg,rgb(0,0,55) 40.56deg,rgb(0,0,57) 40.91deg,rgb(0,0,59) 41.25deg,rgb(0,0,60) 41.59deg,rgb(0,0,62) 41.94deg,rgb(0,0,64) 42.28deg,rgb(0,0,66) 42.62deg,rgb(0,0,67) 42.97deg,rgb(0,0,69) 43.31deg,rgb(0,0,71) 43.66deg,rgb(0,0,73) 44.00deg,rgb(0,0,75) 44.34deg,rgb(0,0,76) 44.69deg,rgb(0,0,78) 45.03deg,rgb(0,0,80) 45.37deg,rgb(0,0,82) 45.72deg,rgb(0,0,84) 46.06deg,rgb(0,0,86) 46.41deg,rgb(0,0,88) 46.75deg,rgb(0,0,90) 47.09deg,rgb(0,0,92) 47.44deg,rgb(0,0,94) 47.78deg,rgb(0,0,96) 48.12deg,rgb(0,0,98) 48.47deg,rgb(0,0,100) 48.81deg,rgb(0,0,102) 49.16deg,rgb(0,0,104) 49.50deg,rgb(0,0,106) 49.84deg,rgb(0,0,108) 50.19deg,rgb(0,0,110) 50.53deg,rgb(0,0,112) 50.87deg,rgb(0,0,114) 51.22deg,rgb(0,0,117) 51.56deg,rgb(0,0,119) 51.91deg,rgb(0,0,121) 52.25deg,rgb(0,0,123) 52.59deg,rgb(0,0,125) 52.94deg,rgb(0,0,128) 53.28deg,rgb(0,0,130) 53.62deg,rgb(0,0,132) 53.97deg,rgb(0,0,135) 54.31deg,rgb(0,0,137) 54.66deg,rgb(0,0,139) 55.00deg,rgb(0,0,142) 55.34deg,rgb(0,0,144) 55.69deg,rgb(0,0,147) 56.03deg,rgb(0,0,149) 56.37deg,rgb(0,0,152) 56.72deg,rgb(0,0,154) 57.06deg,rgb(0,0,157) 57.41deg,rgb(0,0,160) 57.75deg,rgb(0,0,162) 58.09deg,rgb(0,0,165) 58.44deg,rgb(0,0,168) 58.78deg,rgb(0,0,170) 59.12deg,rgb(0,0,173) 59.47deg,rgb(0,0,176) 59.81deg,rgb(0,0,179) 60.16deg,rgb(0,0,182) 60.50deg,rgb(0,0,185) 60.84deg,rgb(0,0,187) 61.19deg,rgb(0,0,190) 61.53deg,rgb(0,0,193) 61.87deg,rgb(0,0,197) 62.22deg,rgb(0,0,200) 62.56deg,rgb(0,0,203) 62.90deg,rgb(0,0,206) 63.25deg,rgb(0,0,209) 63.59deg,rgb(0,0,213) 63.94deg,rgb(0,0,216) 64.28deg,rgb(0,0,219) 64.62deg,rgb(0,0,223) 64.97deg,rgb(0,0,226) 65.31deg,rgb(0,0,230) 65.65deg,rgb(0,0,233) 66.00deg,rgb(0,0,237) 66.34deg,rgb(0,0,241) 66.69deg,rgb(0,0,244) 67.03deg,rgb(0,0,248) 67.37deg,rgb(0,0,252) 67.72deg,rgb(0,0,255) 68.06deg,rgb(0,0,255) 68.40deg,rgb(0,0,255) 68.75deg,rgb(0,0,255) 69.09deg,rgb(0,0,255) 69.44deg,rgb(0,0,255) 69.78deg,rgb(0,0,255) 70.12deg),rgb(255,0,0);background-blend-mode:screen,screen;"></div><div style="position:absolute;left:0;top:0;width:620px;height:478px;clip-path:polygon(-2.0px -2.0px,215.9px -2.0px,205.7px 106.9px,-2.0px 141.4px);background:conic-gradient(from -42.59deg at 181.5px 351.9px,rgb(0,0,0) 0.00deg,rgb(0,0,0) 0.57deg,rgb(0,0,0) 1.14deg,rgb(0,0,0) 1.71deg,rgb(0,0,0) 2.29deg,rgb(0,0,0) 2.86deg,rgb(0,0,0) 3.43deg,rgb(0,0,0) 4.00deg,rgb(0,0,0) 4.57deg,rgb(0,0,0) 5.14deg,rgb(0,0,0) 5.72deg,rgb(0,0,0) 6.29deg,rgb(0,0,0) 6.86deg,rgb(0,0,0) 7.43deg,rgb(0,0,0) 8.00deg,rgb(0,0,0) 8.57deg,rgb(0,0,0) 9.14deg,rgb(0,0,0) 9.72deg,rgb(0,0,0) 10.29deg,rgb(0,0,0) 10.86deg,rgb(0,0,0) 11.43deg,rgb(0,0,0) 12.00deg,rgb(0,0,0) 12.57deg,rgb(0,0,0) 13.14deg,rgb(0,0,0) 13.72deg,rgb(0,0,0) 14.29deg,rgb(0,0,0) 14.86deg,rgb(0,0,0) 15.43deg,rgb(0,0,0) 16.00deg,rgb(0,0,0) 16.57deg,rgb(0,0,0) 17.15deg,rgb(0,0,0) 17.72deg,rgb(0,0,0) 18.29deg,rgb(0,0,0) 18.86deg,rgb(0,0,0) 19.43deg,rgb(0,0,0) 20.00deg,rgb(0,0,0) 20.57deg,rgb(0,0,0) 21.15deg,rgb(0,0,0) 21.72deg,rgb(0,0,0) 22.29deg,rgb(0,0,0) 22.86deg,rgb(0,0,0) 23.43deg,rgb(0,0,0) 24.00deg,rgb(0,0,0) 24.58deg,rgb(0,0,0) 25.15deg,rgb(0,0,0) 25.72deg,rgb(0,0,0) 26.29deg,rgb(0,0,0) 26.86deg,rgb(0,0,0) 27.43deg,rgb(0,0,0) 28.00deg,rgb(0,0,0) 28.58deg,rgb(0,0,0) 29.15deg,rgb(0,0,0) 29.72deg,rgb(0,0,0) 30.29deg,rgb(0,0,0) 30.86deg,rgb(0,0,0) 31.43deg,rgb(0,0,0) 32.00deg,rgb(0,0,0) 32.58deg,rgb(0,0,0) 33.15deg,rgb(5,0,0) 33.72deg,rgb(13,0,0) 34.29deg,rgb(21,0,0) 34.86deg,rgb(29,0,0) 35.43deg,rgb(38,0,0) 36.01deg,rgb(46,0,0) 36.58deg,rgb(55,0,0) 37.15deg,rgb(64,0,0) 37.72deg,rgb(73,0,0) 38.29deg,rgb(82,0,0) 38.86deg,rgb(91,0,0) 39.43deg,rgb(101,0,0) 40.01deg,rgb(111,0,0) 40.58deg,rgb(120,0,0) 41.15deg,rgb(130,0,0) 41.72deg,rgb(141,0,0) 42.29deg,rgb(151,0,0) 42.86deg,rgb(162,0,0) 43.43deg,rgb(173,0,0) 44.01deg,rgb(184,0,0) 44.58deg,rgb(195,0,0) 45.15deg,rgb(207,0,0) 45.72deg,rgb(219,0,0) 46.29deg,rgb(231,0,0) 46.86deg,rgb(244,0,0) 47.44deg,rgb(255,0,0) 48.01deg,rgb(255,0,0) 48.58deg,rgb(255,0,0) 49.15deg,rgb(255,0,0) 49.72deg),conic-gradient(from -101.18deg at 465.1px 62.7px,rgb(0,0,255) 0.00deg,rgb(0,0,255) 0.48deg,rgb(0,0,255) 0.96deg,rgb(0,0,255) 1.43deg,rgb(0,0,252) 1.91deg,rgb(0,0,241) 2.39deg,rgb(0,0,230) 2.87deg,rgb(0,0,220) 3.34deg,rgb(0,0,210) 3.82deg,rgb(0,0,200) 4.30deg,rgb(0,0,190) 4.78deg,rgb(0,0,181) 5.25deg,rgb(0,0,172) 5.73deg,rgb(0,0,162) 6.21deg,rgb(0,0,153) 6.69deg,rgb(0,0,145) 7.17deg,rgb(0,0,136) 7.64deg,rgb(0,0,128) 8.12deg,rgb(0,0,119) 8.60deg,rgb(0,0,111) 9.08deg,rgb(0,0,103) 9.55deg,rgb(0,0,95) 10.03deg,rgb(0,0,88) 10.51deg,rgb(0,0,80) 10.99deg,rgb(0,0,73) 11.46deg,rgb(0,0,65) 11.94deg,rgb(0,0,58) 12.42deg,rgb(0,0,51) 12.90deg,rgb(0,0,44) 13.37deg,rgb(0,0,37) 13.85deg,rgb(0,0,30) 14.33deg,rgb(0,0,23) 14.81deg,rgb(0,0,17) 15.29deg,rgb(0,0,10) 15.76deg,rgb(0,0,4) 16.24deg,rgb(0,0,0) 16.72deg,rgb(0,0,0) 17.20deg,rgb(0,0,0) 17.67deg,rgb(0,0,0) 18.15deg,rgb(0,0,0) 18.63deg,rgb(0,0,0) 19.11deg,rgb(0,0,0) 19.58deg,rgb(0,0,0) 20.06deg,rgb(0,0,0) 20.54deg,rgb(0,0,0) 21.02deg,rgb(0,0,0) 21.50deg,rgb(0,0,0) 21.97deg,rgb(0,0,0) 22.45deg,rgb(0,0,0) 22.93deg,rgb(0,0,0) 23.41deg,rgb(0,0,0) 23.88deg,rgb(0,0,0) 24.36deg,rgb(0,0,0) 24.84deg,rgb(0,0,0) 25.32deg,rgb(0,0,0) 25.79deg,rgb(0,0,0) 26.27deg,rgb(0,0,0) 26.75deg,rgb(0,0,0) 27.23deg),rgb(0,255,0);background-blend-mode:screen,screen;"></div><div style="position:absolute;left:0;top:0;width:620px;height:478px;clip-path:polygon(205.0px 104.6px,582.4px 480.0px,-2.0px 480.0px,-2.0px 139.0px);background:conic-gradient(from 132.69deg at 129.5px 31.3px,rgb(255,0,0) 0.00deg,rgb(255,0,0) 0.36deg,rgb(255,0,0) 0.72deg,rgb(255,0,0) 1.08deg,rgb(255,0,0) 1.44deg,rgb(255,0,0) 1.80deg,rgb(255,0,0) 2.16deg,rgb(251,0,0) 2.51deg,rgb(247,0,0) 2.87deg,rgb(243,0,0) 3.23deg,rgb(239,0,0) 3.59deg,rgb(235,0,0) 3.95deg,rgb(231,0,0) 4.31deg,rgb(227,0,0) 4.67deg,rgb(224,0,0) 5.03deg,rgb(220,0,0) 5.39deg,rgb(216,0,0) 5.75deg,rgb(213,0,0) 6.11deg,rgb(209,0,0) 6.47deg,rgb(206,0,0) 6.83deg,rgb(202,0,0) 7.18deg,rgb(199,0,0) 7.54deg,rgb(196,0,0) 7.90deg,rgb(192,0,0) 8.26deg,rgb(189,0,0) 8.62deg,rgb(186,0,0) 8.98deg,rgb(183,0,0) 9.34deg,rgb(180,0,0) 9.70deg,rgb(176,0,0) 10.06deg,rgb(173,0,0) 10.42deg,rgb(170,0,0) 10.78deg,rgb(167,0,0) 11.14deg,rgb(164,0,0) 11.49deg,rgb(161,0,0) 11.85deg,rgb(159,0,0) 12.21deg,rgb(156,0,0) 12.57deg,rgb(153,0,0) 12.93deg,rgb(150,0,0) 13.29deg,rgb(147,0,0) 13.65deg,rgb(144,0,0) 14.01deg,rgb(142,0,0) 14.37deg,rgb(139,0,0) 14.73deg,rgb(136,0,0) 15.09deg,rgb(134,0,0) 15.45deg,rgb(131,0,0) 15.81deg,rgb(128,0,0) 16.16deg,rgb(126,0,0) 16.52deg,rgb(123,0,0) 16.88deg,rgb(121,0,0) 17.24deg,rgb(118,0,0) 17.60deg,rgb(116,0,0) 17.96deg,rgb(113,0,0) 18.32deg,rgb(111,0,0) 18.68deg,rgb(108,0,0) 19.04deg,rgb(106,0,0) 19.40deg,rgb(104,0,0) 19.76deg,rgb(101,0,0) 20.12deg,rgb(99,0,0) 20.48deg,rgb(97,0,0) 20.83deg,rgb(94,0,0) 21.19deg,rgb(92,0,0) 21.55deg,rgb(90,0,0) 21.91deg,rgb(87,0,0) 22.27deg,rgb(85,0,0) 22.63deg,rgb(83,0,0) 22.99deg,rgb(81,0,0) 23.35deg,rgb(78,0,0) 23.71deg,rgb(76,0,0) 24.07deg,rgb(74,0,0) 24.43deg,rgb(72,0,0) 24.79deg,rgb(70,0,0) 25.14deg,rgb(68,0,0) 25.50deg,rgb(66,0,0) 25.86deg,rgb(64,0,0) 26.22deg,rgb(61,0,0) 26.58deg,rgb(59,0,0) 26.94deg,rgb(57,0,0) 27.30deg,rgb(55,0,0) 27.66deg,rgb(53,0,0) 28.02deg,rgb(51,0,0) 28.38deg,rgb(49,0,0) 28.74deg,rgb(47,0,0) 29.10deg,rgb(45,0,0) 29.46deg,rgb(43,0,0) 29.81deg,rgb(41,0,0) 30.17deg,rgb(39,0,0) 30.53deg,rgb(37,0,0) 30.89deg,rgb(35,0,0) 31.25deg,rgb(33,0,0) 31.61deg,rgb(32,0,0) 31.97deg,rgb(30,0,0) 32.33deg,rgb(28,0,0) 32.69deg,rgb(26,0,0) 33.05deg,rgb(24,0,0) 33.41deg,rgb(22,0,0) 33.77deg,rgb(20,0,0) 34.13deg,rgb(18,0,0) 34.48deg,rgb(16,0,0) 34.84deg,rgb(15,0,0) 35.20deg,rgb(13,0,0) 35.56deg,rgb(11,0,0) 35.92deg,rgb(9,0,0) 36.28deg,rgb(7,0,0) 36.64deg,rgb(6,0,0) 37.00deg,rgb(4,0,0) 37.36deg,rgb(2,0,0) 37.72deg,rgb(0,0,0) 38.08deg,rgb(0,0,0) 38.44deg,rgb(0,0,0) 38.79deg,rgb(0,0,0) 39.15deg,rgb(0,0,0) 39.51deg,rgb(0,0,0) 39.87deg,rgb(0,0,0) 40.23deg,rgb(0,0,0) 40.59deg,rgb(0,0,0) 40.95deg,rgb(0,0,0) 41.31deg,rgb(0,0,0) 41.67deg,rgb(0,0,0) 42.03deg,rgb(0,0,0) 42.39deg,rgb(0,0,0) 42.75deg,rgb(0,0,0) 43.11deg,rgb(0,0,0) 43.46deg,rgb(0,0,0) 43.82deg,rgb(0,0,0) 44.18deg,rgb(0,0,0) 44.54deg,rgb(0,0,0) 44.90deg,rgb(0,0,0) 45.26deg,rgb(0,0,0) 45.62deg,rgb(0,0,0) 45.98deg,rgb(0,0,0) 46.34deg,rgb(0,0,0) 46.70deg,rgb(0,0,0) 47.06deg,rgb(0,0,0) 47.42deg,rgb(0,0,0) 47.78deg,rgb(0,0,0) 48.13deg,rgb(0,0,0) 48.49deg,rgb(0,0,0) 48.85deg,rgb(0,0,0) 49.21deg,rgb(0,0,0) 49.57deg,rgb(0,0,0) 49.93deg,rgb(0,0,0) 50.29deg,rgb(0,0,0) 50.65deg,rgb(0,0,0) 51.01deg,rgb(0,0,0) 51.37deg,rgb(0,0,0) 51.73deg,rgb(0,0,0) 52.09deg,rgb(0,0,0) 52.44deg,rgb(0,0,0) 52.80deg,rgb(0,0,0) 53.16deg,rgb(0,0,0) 53.52deg,rgb(0,0,0) 53.88deg,rgb(0,0,0) 54.24deg,rgb(0,0,0) 54.60deg,rgb(0,0,0) 54.96deg,rgb(0,0,0) 55.32deg,rgb(0,0,0) 55.68deg,rgb(0,0,0) 56.04deg,rgb(0,0,0) 56.40deg,rgb(0,0,0) 56.76deg,rgb(0,0,0) 57.11deg,rgb(0,0,0) 57.47deg,rgb(0,0,0) 57.83deg,rgb(0,0,0) 58.19deg,rgb(0,0,0) 58.55deg,rgb(0,0,0) 58.91deg,rgb(0,0,0) 59.27deg,rgb(0,0,0) 59.63deg,rgb(0,0,0) 59.99deg,rgb(0,0,0) 60.35deg,rgb(0,0,0) 60.71deg,rgb(0,0,0) 61.07deg,rgb(0,0,0) 61.43deg,rgb(0,0,0) 61.78deg,rgb(0,0,0) 62.14deg,rgb(0,0,0) 62.50deg,rgb(0,0,0) 62.86deg,rgb(0,0,0) 63.22deg,rgb(0,0,0) 63.58deg,rgb(0,0,0) 63.94deg,rgb(0,0,0) 64.30deg,rgb(0,0,0) 64.66deg,rgb(0,0,0) 65.02deg,rgb(0,0,0) 65.38deg,rgb(0,0,0) 65.74deg,rgb(0,0,0) 66.09deg,rgb(0,0,0) 66.45deg,rgb(0,0,0) 66.81deg,rgb(0,0,0) 67.17deg,rgb(0,0,0) 67.53deg,rgb(0,0,0) 67.89deg,rgb(0,0,0) 68.25deg,rgb(0,0,0) 68.61deg,rgb(0,0,0) 68.97deg,rgb(0,0,0) 69.33deg,rgb(0,0,0) 69.69deg,rgb(0,0,0) 70.05deg,rgb(0,0,0) 70.41deg,rgb(0,0,0) 70.76deg,rgb(0,0,0) 71.12deg,rgb(0,0,0) 71.48deg,rgb(0,0,0) 71.84deg,rgb(0,0,0) 72.20deg,rgb(0,0,0) 72.56deg,rgb(0,0,0) 72.92deg,rgb(0,0,0) 73.28deg,rgb(0,0,0) 73.64deg,rgb(0,0,0) 74.00deg,rgb(0,0,0) 74.36deg,rgb(0,0,0) 74.72deg,rgb(0,0,0) 75.08deg,rgb(0,0,0) 75.43deg,rgb(0,0,0) 75.79deg,rgb(0,0,0) 76.15deg,rgb(0,0,0) 76.51deg,rgb(0,0,0) 76.87deg,rgb(0,0,0) 77.23deg,rgb(0,0,0) 77.59deg,rgb(0,0,0) 77.95deg,rgb(0,0,0) 78.31deg,rgb(0,0,0) 78.67deg,rgb(0,0,0) 79.03deg,rgb(0,0,0) 79.39deg,rgb(0,0,0) 79.74deg,rgb(0,0,0) 80.10deg,rgb(0,0,0) 80.46deg,rgb(0,0,0) 80.82deg,rgb(0,0,0) 81.18deg,rgb(0,0,0) 81.54deg,rgb(0,0,0) 81.90deg,rgb(0,0,0) 82.26deg,rgb(0,0,0) 82.62deg,rgb(0,0,0) 82.98deg,rgb(0,0,0) 83.34deg,rgb(0,0,0) 83.70deg,rgb(0,0,0) 84.06deg,rgb(0,0,0) 84.41deg,rgb(0,0,0) 84.77deg,rgb(0,0,0) 85.13deg,rgb(0,0,0) 85.49deg,rgb(0,0,0) 85.85deg,rgb(0,0,0) 86.21deg,rgb(0,0,0) 86.57deg,rgb(0,0,0) 86.93deg,rgb(0,0,0) 87.29deg,rgb(0,0,0) 87.65deg,rgb(0,0,0) 88.01deg,rgb(0,0,0) 88.37deg,rgb(0,0,0) 88.73deg,rgb(0,0,0) 89.08deg,rgb(0,0,0) 89.44deg,rgb(0,0,0) 89.80deg,rgb(0,0,0) 90.16deg,rgb(0,0,0) 90.52deg,rgb(0,0,0) 90.88deg,rgb(0,0,0) 91.24deg,rgb(0,0,0) 91.60deg,rgb(0,0,0) 91.96deg,rgb(0,0,0) 92.32deg,rgb(0,0,0) 92.68deg,rgb(0,0,0) 93.04deg,rgb(0,0,0) 93.39deg,rgb(0,0,0) 93.75deg,rgb(0,0,0) 94.11deg,rgb(0,0,0) 94.47deg,rgb(0,0,0) 94.83deg,rgb(0,0,0) 95.19deg,rgb(0,0,0) 95.55deg,rgb(0,0,0) 95.91deg,rgb(0,0,0) 96.27deg,rgb(0,0,0) 96.63deg,rgb(0,0,0) 96.99deg,rgb(0,0,0) 97.35deg,rgb(0,0,0) 97.71deg,rgb(0,0,0) 98.06deg,rgb(0,0,0) 98.42deg,rgb(0,0,0) 98.78deg,rgb(0,0,0) 99.14deg,rgb(0,0,0) 99.50deg),conic-gradient(from -197.19deg at 465.1px 62.7px,rgb(0,0,0) 0.00deg,rgb(0,0,0) 0.36deg,rgb(0,0,0) 0.73deg,rgb(0,0,0) 1.09deg,rgb(0,0,0) 1.46deg,rgb(0,0,0) 1.82deg,rgb(0,0,0) 2.19deg,rgb(0,0,0) 2.55deg,rgb(0,0,0) 2.92deg,rgb(0,0,0) 3.28deg,rgb(0,0,0) 3.65deg,rgb(0,0,0) 4.01deg,rgb(0,0,0) 4.37deg,rgb(0,0,0) 4.74deg,rgb(0,0,0) 5.10deg,rgb(0,0,0) 5.47deg,rgb(0,0,0) 5.83deg,rgb(0,0,0) 6.20deg,rgb(0,0,0) 6.56deg,rgb(0,0,0) 6.93deg,rgb(0,0,0) 7.29deg,rgb(0,0,0) 7.66deg,rgb(0,0,0) 8.02deg,rgb(0,0,0) 8.39deg,rgb(0,0,0) 8.75deg,rgb(0,0,0) 9.11deg,rgb(0,0,0) 9.48deg,rgb(0,0,0) 9.84deg,rgb(0,0,0) 10.21deg,rgb(0,0,0) 10.57deg,rgb(0,0,0) 10.94deg,rgb(0,0,0) 11.30deg,rgb(0,0,0) 11.67deg,rgb(0,0,0) 12.03deg,rgb(0,0,0) 12.40deg,rgb(0,0,0) 12.76deg,rgb(0,0,0) 13.12deg,rgb(0,0,0) 13.49deg,rgb(0,0,0) 13.85deg,rgb(0,0,0) 14.22deg,rgb(0,0,0) 14.58deg,rgb(0,0,0) 14.95deg,rgb(0,0,0) 15.31deg,rgb(0,0,0) 15.68deg,rgb(0,0,0) 16.04deg,rgb(0,0,0) 16.41deg,rgb(0,0,0) 16.77deg,rgb(0,0,0) 17.14deg,rgb(0,0,0) 17.50deg,rgb(0,0,0) 17.86deg,rgb(0,0,0) 18.23deg,rgb(0,0,0) 18.59deg,rgb(0,0,0) 18.96deg,rgb(0,0,0) 19.32deg,rgb(0,0,0) 19.69deg,rgb(0,0,0) 20.05deg,rgb(0,0,0) 20.42deg,rgb(0,0,0) 20.78deg,rgb(0,0,0) 21.15deg,rgb(0,0,0) 21.51deg,rgb(0,0,0) 21.87deg,rgb(0,0,0) 22.24deg,rgb(0,0,0) 22.60deg,rgb(0,0,0) 22.97deg,rgb(0,0,0) 23.33deg,rgb(0,0,0) 23.70deg,rgb(0,0,0) 24.06deg,rgb(0,0,0) 24.43deg,rgb(0,0,0) 24.79deg,rgb(0,0,0) 25.16deg,rgb(0,0,0) 25.52deg,rgb(0,0,0) 25.89deg,rgb(0,0,0) 26.25deg,rgb(0,0,0) 26.61deg,rgb(0,0,0) 26.98deg,rgb(0,0,0) 27.34deg,rgb(0,0,0) 27.71deg,rgb(0,0,0) 28.07deg,rgb(0,0,0) 28.44deg,rgb(0,0,0) 28.80deg,rgb(0,0,0) 29.17deg,rgb(0,0,0) 29.53deg,rgb(0,0,0) 29.90deg,rgb(0,0,0) 30.26deg,rgb(0,0,0) 30.62deg,rgb(0,0,0) 30.99deg,rgb(0,0,0) 31.35deg,rgb(0,0,0) 31.72deg,rgb(0,0,0) 32.08deg,rgb(0,0,0) 32.45deg,rgb(0,0,0) 32.81deg,rgb(0,0,0) 33.18deg,rgb(0,0,0) 33.54deg,rgb(0,0,0) 33.91deg,rgb(0,0,0) 34.27deg,rgb(0,0,0) 34.64deg,rgb(0,0,0) 35.00deg,rgb(0,0,0) 35.36deg,rgb(0,0,0) 35.73deg,rgb(0,0,0) 36.09deg,rgb(0,0,0) 36.46deg,rgb(0,0,0) 36.82deg,rgb(0,0,0) 37.19deg,rgb(0,0,0) 37.55deg,rgb(0,0,0) 37.92deg,rgb(0,0,0) 38.28deg,rgb(0,0,0) 38.65deg,rgb(0,0,0) 39.01deg,rgb(0,0,0) 39.37deg,rgb(0,0,0) 39.74deg,rgb(0,0,0) 40.10deg,rgb(0,0,0) 40.47deg,rgb(0,0,0) 40.83deg,rgb(0,0,0) 41.20deg,rgb(0,0,0) 41.56deg,rgb(0,0,0) 41.93deg,rgb(0,0,0) 42.29deg,rgb(0,0,0) 42.66deg,rgb(0,0,0) 43.02deg,rgb(0,0,0) 43.38deg,rgb(0,0,0) 43.75deg,rgb(0,0,0) 44.11deg,rgb(0,0,0) 44.48deg,rgb(0,0,0) 44.84deg,rgb(0,0,0) 45.21deg,rgb(0,0,0) 45.57deg,rgb(0,0,0) 45.94deg,rgb(0,0,0) 46.30deg,rgb(0,0,0) 46.67deg,rgb(0,0,0) 47.03deg,rgb(0,0,0) 47.40deg,rgb(0,0,0) 47.76deg,rgb(0,0,0) 48.12deg,rgb(0,0,0) 48.49deg,rgb(0,0,0) 48.85deg,rgb(0,0,0) 49.22deg,rgb(0,0,0) 49.58deg,rgb(0,0,0) 49.95deg,rgb(0,0,0) 50.31deg,rgb(0,0,0) 50.68deg,rgb(0,0,0) 51.04deg,rgb(0,0,0) 51.41deg,rgb(0,0,0) 51.77deg,rgb(0,0,0) 52.13deg,rgb(0,0,0) 52.50deg,rgb(0,0,0) 52.86deg,rgb(0,0,0) 53.23deg,rgb(0,0,0) 53.59deg,rgb(0,0,0) 53.96deg,rgb(0,0,0) 54.32deg,rgb(0,0,0) 54.69deg,rgb(0,0,0) 55.05deg,rgb(0,0,0) 55.42deg,rgb(0,0,0) 55.78deg,rgb(0,0,0) 56.15deg,rgb(0,0,0) 56.51deg,rgb(0,0,0) 56.87deg,rgb(0,0,0) 57.24deg,rgb(0,0,0) 57.60deg,rgb(0,0,0) 57.97deg,rgb(0,0,0) 58.33deg,rgb(0,0,0) 58.70deg,rgb(0,0,0) 59.06deg,rgb(0,0,0) 59.43deg,rgb(0,0,0) 59.79deg,rgb(0,0,0) 60.16deg,rgb(0,0,0) 60.52deg,rgb(0,0,0) 60.88deg,rgb(0,0,0) 61.25deg,rgb(0,0,0) 61.61deg,rgb(0,1,0) 61.98deg,rgb(0,2,0) 62.34deg,rgb(0,3,0) 62.71deg,rgb(0,4,0) 63.07deg,rgb(0,5,0) 63.44deg,rgb(0,6,0) 63.80deg,rgb(0,7,0) 64.17deg,rgb(0,7,0) 64.53deg,rgb(0,8,0) 64.90deg,rgb(0,9,0) 65.26deg,rgb(0,11,0) 65.62deg,rgb(0,12,0) 65.99deg,rgb(0,13,0) 66.35deg,rgb(0,14,0) 66.72deg,rgb(0,15,0) 67.08deg,rgb(0,16,0) 67.45deg,rgb(0,17,0) 67.81deg,rgb(0,18,0) 68.18deg,rgb(0,19,0) 68.54deg,rgb(0,20,0) 68.91deg,rgb(0,21,0) 69.27deg,rgb(0,23,0) 69.63deg,rgb(0,24,0) 70.00deg,rgb(0,25,0) 70.36deg,rgb(0,26,0) 70.73deg,rgb(0,27,0) 71.09deg,rgb(0,29,0) 71.46deg,rgb(0,30,0) 71.82deg,rgb(0,31,0) 72.19deg,rgb(0,32,0) 72.55deg,rgb(0,34,0) 72.92deg,rgb(0,35,0) 73.28deg,rgb(0,37,0) 73.65deg,rgb(0,38,0) 74.01deg,rgb(0,39,0) 74.37deg,rgb(0,41,0) 74.74deg,rgb(0,42,0) 75.10deg,rgb(0,44,0) 75.47deg,rgb(0,45,0) 75.83deg,rgb(0,47,0) 76.20deg,rgb(0,48,0) 76.56deg,rgb(0,50,0) 76.93deg,rgb(0,52,0) 77.29deg,rgb(0,53,0) 77.66deg,rgb(0,55,0) 78.02deg,rgb(0,57,0) 78.38deg,rgb(0,58,0) 78.75deg,rgb(0,60,0) 79.11deg,rgb(0,62,0) 79.48deg,rgb(0,64,0) 79.84deg,rgb(0,66,0) 80.21deg,rgb(0,68,0) 80.57deg,rgb(0,70,0) 80.94deg,rgb(0,72,0) 81.30deg,rgb(0,74,0) 81.67deg,rgb(0,76,0) 82.03deg,rgb(0,78,0) 82.39deg,rgb(0,80,0) 82.76deg,rgb(0,82,0) 83.12deg,rgb(0,85,0) 83.49deg,rgb(0,87,0) 83.85deg,rgb(0,89,0) 84.22deg,rgb(0,92,0) 84.58deg,rgb(0,94,0) 84.95deg,rgb(0,97,0) 85.31deg,rgb(0,99,0) 85.68deg,rgb(0,102,0) 86.04deg,rgb(0,105,0) 86.41deg,rgb(0,108,0) 86.77deg,rgb(0,111,0) 87.13deg,rgb(0,114,0) 87.50deg,rgb(0,117,0) 87.86deg,rgb(0,120,0) 88.23deg,rgb(0,123,0) 88.59deg,rgb(0,126,0) 88.96deg,rgb(0,130,0) 89.32deg,rgb(0,133,0) 89.69deg,rgb(0,137,0) 90.05deg,rgb(0,141,0) 90.42deg,rgb(0,145,0) 90.78deg,rgb(0,149,0) 91.14deg,rgb(0,153,0) 91.51deg,rgb(0,157,0) 91.87deg,rgb(0,162,0) 92.24deg,rgb(0,166,0) 92.60deg,rgb(0,171,0) 92.97deg,rgb(0,176,0) 93.33deg,rgb(0,181,0) 93.70deg,rgb(0,187,0) 94.06deg,rgb(0,192,0) 94.43deg,rgb(0,198,0) 94.79deg,rgb(0,204,0) 95.16deg,rgb(0,210,0) 95.52deg,rgb(0,216,0) 95.88deg,rgb(0,223,0) 96.25deg,rgb(0,230,0) 96.61deg,rgb(0,238,0) 96.98deg,rgb(0,245,0) 97.34deg,rgb(0,254,0) 97.71deg,rgb(0,255,0) 98.07deg,rgb(0,255,0) 98.44deg,rgb(0,255,0) 98.80deg,rgb(0,255,0) 99.17deg,rgb(0,255,0) 99.53deg),rgb(0,0,255);background-blend-mode:screen,screen;"></div></div></div>
<div style="position:absolute;left:1387px;top:526px;width:245px;height:26px;background:#2c2c2c;"></div>
<div style="position:absolute;left:372px;top:628px;width:247px;height:176px;background:#242424;border:1px solid #8a8a8a;box-sizing:border-box;"></div>
<div style="position:absolute;left:372px;top:659px;width:247px;height:1px;background:#8a8a8a;"></div>
<div style="position:absolute;left:367px;top:658.7px;width:5px;height:1.6px;background:#d4d4d4;"></div>
<div style="position:absolute;left:372px;top:716px;width:247px;height:1px;background:#8a8a8a;"></div>
<div style="position:absolute;left:367px;top:715.7px;width:5px;height:1.6px;background:#d4d4d4;"></div>
<div style="position:absolute;left:372px;top:774px;width:247px;height:1px;background:#8a8a8a;"></div>
<div style="position:absolute;left:367px;top:773.7px;width:5px;height:1.6px;background:#d4d4d4;"></div>
<div style="position:absolute;left:372px;top:804px;width:1.6px;height:5px;background:#d4d4d4;"></div>
<div style="position:absolute;left:618px;top:804px;width:1.6px;height:5px;background:#d4d4d4;"></div>
<div style="position:absolute;left:397.5px;top:716px;width:65.5px;height:27.5px;background:linear-gradient(#ff1010 0%,#f00 40%,#c00000 80%,#900000 100%);border:1.5px solid #000;box-sizing:border-box;"></div>
<div style="position:absolute;left:529.5px;top:654.5px;width:65.5px;height:62px;background:linear-gradient(#3030ff 0%,#1010ff 40%,#0000d0 80%,#000090 100%);border:1.5px solid #000;box-sizing:border-box;"></div>
<div style="position:absolute;left:646px;top:620px;width:331px;height:192.5px;border:1px solid #999;box-sizing:border-box;overflow:hidden;"><div style="position:absolute;left:0;top:0;width:329px;height:190.5px;overflow:hidden;"><div style="position:absolute;left:0;top:0.0px;width:329px;height:48.2px;background:linear-gradient(90deg,#90f8d8 0%,#c0fcdc 25%,#eaffe8 50%,#fffce0 75%,#ffc8b0 100%);"><div style="position:absolute;left:0;top:0;width:100%;height:100%;background:linear-gradient(90deg,#88fcc8 0%,#b0fcc4 25%,#d8ffcc 50%,#fcffd0 75%,#ffe0a8 100%);-webkit-mask-image:linear-gradient(#000,transparent);mask-image:linear-gradient(#000,transparent);"></div></div><div style="position:absolute;left:0;top:47.6px;width:329px;height:46.3px;background:linear-gradient(90deg,#a0f8ff 0%,#d8fcff 25%,#ffffff 50%,#ffe8e8 75%,#ffb0b8 100%);"><div style="position:absolute;left:0;top:0;width:100%;height:100%;background:linear-gradient(90deg,#90f8d8 0%,#c0fcdc 25%,#eaffe8 50%,#fffce0 75%,#ffc8b0 100%);-webkit-mask-image:linear-gradient(#000,transparent);mask-image:linear-gradient(#000,transparent);"></div></div><div style="position:absolute;left:0;top:93.3px;width:329px;height:50.1px;background:linear-gradient(90deg,#a8e0ff 0%,#d8e0ff 25%,#fae8ff 50%,#ffc8e0 75%,#ffa0c0 100%);"><div style="position:absolute;left:0;top:0;width:100%;height:100%;background:linear-gradient(90deg,#a0f8ff 0%,#d8fcff 25%,#ffffff 50%,#ffe8e8 75%,#ffb0b8 100%);-webkit-mask-image:linear-gradient(#000,transparent);mask-image:linear-gradient(#000,transparent);"></div></div><div style="position:absolute;left:0;top:142.9px;width:329px;height:48.2px;background:linear-gradient(90deg,#a8c0ff 0%,#d8c8ff 25%,#ffc0f8 50%,#ffa8d8 75%,#ff88b8 100%);"><div style="position:absolute;left:0;top:0;width:100%;height:100%;background:linear-gradient(90deg,#a8e0ff 0%,#d8e0ff 25%,#fae8ff 50%,#ffc8e0 75%,#ffa0c0 100%);-webkit-mask-image:linear-gradient(#000,transparent);mask-image:linear-gradient(#000,transparent);"></div></div></div></div>
<div style="position:absolute;left:994px;top:607px;width:613px;height:38px;background:linear-gradient(#2d2d2d 0%,#2d2d2d 48%,#131313 52%,#131313 100%);"></div>
<div style="position:absolute;left:994px;top:607px;width:14px;height:38px;background:#040404;"></div>
<div style="position:absolute;left:1008px;top:645.0px;width:599px;height:34.8px;background:#404040;"></div>
<div style="position:absolute;left:994px;top:645.0px;width:14px;height:34.8px;background:#262626;"></div>
<div style="position:absolute;left:1008px;top:679.8px;width:599px;height:34.8px;background:#7a7a7a;"></div>
<div style="position:absolute;left:994px;top:679.8px;width:14px;height:34.8px;background:#2e2e2e;"></div>
<div style="position:absolute;left:1008px;top:714.6px;width:599px;height:34.8px;background:#404040;"></div>
<div style="position:absolute;left:994px;top:714.6px;width:14px;height:34.8px;background:#262626;"></div>
<div style="position:absolute;left:1008px;top:749.4px;width:599px;height:34.8px;background:#7a7a7a;"></div>
<div style="position:absolute;left:994px;top:749.4px;width:14px;height:34.8px;background:#2e2e2e;"></div>
<div style="position:absolute;left:1008px;top:784.2px;width:599px;height:13.6px;background:#404040;"></div>
<div style="position:absolute;left:994px;top:784.2px;width:14px;height:13.6px;background:#262626;"></div>
<div style="position:absolute;left:1607.5px;top:645.5px;width:15.5px;height:152.5px;background:#4a4a4a;border-radius:3px;"></div>
<div style="position:absolute;left:1609px;top:669px;width:12.5px;height:83px;background:#3a3a3a;border-radius:6px;"></div>
<div style="position:absolute;left:1609px;top:647px;width:12.5px;height:17px;background:linear-gradient(#7a7a7a,#5e5e5e);border-radius:3px;"></div>
<div style="position:absolute;left:1609px;top:779px;width:12.5px;height:17px;background:linear-gradient(#7a7a7a,#5e5e5e);border-radius:3px;"></div>
<div style="position:absolute;left:1008px;top:798px;width:599px;height:21px;background:#555;border-radius:3px;"></div>
<div style="position:absolute;left:1026.5px;top:800.5px;width:513px;height:16px;background:#3e3e3e;border-radius:8px;"></div>
<div style="position:absolute;left:1009px;top:800px;width:14.5px;height:17px;background:linear-gradient(#7e7e7e,#666);border-radius:3px;"></div>
<div style="position:absolute;left:1591px;top:800px;width:14.5px;height:17px;background:linear-gradient(#7e7e7e,#666);border-radius:3px;"></div>
<div style="position:absolute;left:4.5px;top:828.5px;width:155.2px;height:73px;background:linear-gradient(90deg,rgba(0,0,0,0.12),rgba(0,0,0,0) 5%,rgba(0,0,0,0) 95%,rgba(0,0,0,0.12)),linear-gradient(#ababab 0%,#959595 30%,#7c7c7c 60%,#5c5c5c 100%);border-radius:4px 4px 0 0;"></div>
<div style="position:absolute;left:10.5px;top:834.8px;width:143px;height:45px;background:#c0c0c0;border-radius:5px;box-shadow:inset 0 2px 1px rgba(0,0,0,0.25);"></div>
<div style="position:absolute;left:162.4px;top:828.5px;width:155.2px;height:73px;background:linear-gradient(90deg,rgba(0,0,0,0.12),rgba(0,0,0,0) 5%,rgba(0,0,0,0) 95%,rgba(0,0,0,0.12)),linear-gradient(#ababab 0%,#959595 30%,#7c7c7c 60%,#5c5c5c 100%);border-radius:4px 4px 0 0;"></div>
<div style="position:absolute;left:168.4px;top:834.8px;width:143px;height:45px;background:#c00000;border-radius:5px;box-shadow:inset 0 2px 1px rgba(0,0,0,0.25);"></div>
<div style="position:absolute;left:320.3px;top:828.5px;width:155.2px;height:73px;background:linear-gradient(90deg,rgba(0,0,0,0.12),rgba(0,0,0,0) 5%,rgba(0,0,0,0) 95%,rgba(0,0,0,0.12)),linear-gradient(#ababab 0%,#959595 30%,#7c7c7c 60%,#5c5c5c 100%);border-radius:4px 4px 0 0;"></div>
<div style="position:absolute;left:326.3px;top:834.8px;width:143px;height:45px;background:#00c000;border-radius:5px;box-shadow:inset 0 2px 1px rgba(0,0,0,0.25);"></div>
<div style="position:absolute;left:478.2px;top:828.5px;width:155.2px;height:73px;background:linear-gradient(90deg,rgba(0,0,0,0.12),rgba(0,0,0,0) 5%,rgba(0,0,0,0) 95%,rgba(0,0,0,0.12)),linear-gradient(#ababab 0%,#959595 30%,#7c7c7c 60%,#5c5c5c 100%);border-radius:4px 4px 0 0;"></div>
<div style="position:absolute;left:484.2px;top:834.8px;width:143px;height:45px;background:#0000c0;border-radius:5px;box-shadow:inset 0 2px 1px rgba(0,0,0,0.25);"></div>
<div style="position:absolute;left:636.1px;top:828.5px;width:155.2px;height:73px;background:linear-gradient(90deg,rgba(0,0,0,0.12),rgba(0,0,0,0) 5%,rgba(0,0,0,0) 95%,rgba(0,0,0,0.12)),linear-gradient(#ababab 0%,#959595 30%,#7c7c7c 60%,#5c5c5c 100%);border-radius:4px 4px 0 0;"></div>
<div style="position:absolute;left:642.1px;top:834.8px;width:143px;height:45px;background:#00c0c0;border-radius:5px;box-shadow:inset 0 2px 1px rgba(0,0,0,0.25);"></div>
<div style="position:absolute;left:794.0px;top:828.5px;width:155.2px;height:73px;background:linear-gradient(90deg,rgba(0,0,0,0.12),rgba(0,0,0,0) 5%,rgba(0,0,0,0) 95%,rgba(0,0,0,0.12)),linear-gradient(#ababab 0%,#959595 30%,#7c7c7c 60%,#5c5c5c 100%);border-radius:4px 4px 0 0;"></div>
<div style="position:absolute;left:800.0px;top:834.8px;width:143px;height:45px;background:#c000c0;border-radius:5px;box-shadow:inset 0 2px 1px rgba(0,0,0,0.25);"></div>
<div style="position:absolute;left:951.9px;top:828.5px;width:155.2px;height:73px;background:linear-gradient(90deg,rgba(0,0,0,0.12),rgba(0,0,0,0) 5%,rgba(0,0,0,0) 95%,rgba(0,0,0,0.12)),linear-gradient(#ababab 0%,#959595 30%,#7c7c7c 60%,#5c5c5c 100%);border-radius:4px 4px 0 0;"></div>
<div style="position:absolute;left:957.9px;top:834.8px;width:143px;height:45px;background:#c0c000;border-radius:5px;box-shadow:inset 0 2px 1px rgba(0,0,0,0.25);"></div>
<div style="position:absolute;left:1109.5px;top:828.5px;width:156.5px;height:73px;background:linear-gradient(#1c1c1c,#2a2a2a 35%,#303030);border-radius:5px 5px 0 0;"></div>
<div style="position:absolute;left:1117px;top:834.6px;width:142.5px;height:45.2px;background:#fff;border-radius:5px;"></div>
<div style="position:absolute;left:1269px;top:828.6px;width:60px;height:72.4px;background:#333;"></div>
<div style="position:absolute;left:1269px;top:828.6px;width:60px;height:22.5px;background:linear-gradient(#b4b4b4 0%,#a0a0a0 35%,#8a8a8a 65%,#6e6e6e 100%);border-radius:5px 5px 0 0;"></div>
<div style="position:absolute;left:1269px;top:852px;width:60px;height:49px;background:linear-gradient(#8a8a8a,#b0b0b0 30%,#a0a0a0 60%,#7e7e7e);"></div>
<div style="position:absolute;left:1289.9px;top:830px;width:19px;height:19px;border-radius:50%;background:radial-gradient(circle at 50% 30%,#7a7a7a,#8e8e8e 60%,#a8a8a8);"></div>
<div style="position:absolute;left:1279.5px;top:859px;width:38.7px;height:38.4px;background:linear-gradient(#cfcfcf 0%,#b8b8b8 48%,#9a9a9a 52%,#a8a8a8 100%);border:3px solid #1e1e1e;border-radius:7px;box-sizing:border-box;"></div>
<div style="position:absolute;left:1290.8px;top:870px;width:17.2px;height:17px;background:linear-gradient(#181818 50%,#000 50%);"></div>
<div style="position:absolute;left:1329.5px;top:828.3px;width:57.8px;height:37.5px;background:linear-gradient(#b4b4b4 0%,#a0a0a0 35%,#8a8a8a 65%,#6e6e6e 100%);"></div>
<div style="position:absolute;left:1346.5px;top:834.5px;width:25px;height:25px;border-radius:50%;background:radial-gradient(circle at 50% 25%,#7c7c7c,#8c8c8c 55%,#a4a4a4);"></div>
<div style="position:absolute;left:1388.5px;top:828.3px;width:54.8px;height:37.5px;background:linear-gradient(#b4b4b4 0%,#a0a0a0 35%,#8a8a8a 65%,#6e6e6e 100%);"></div>
<div style="position:absolute;left:1404.0px;top:834.5px;width:25px;height:25px;border-radius:50%;background:radial-gradient(circle at 50% 25%,#7c7c7c,#8c8c8c 55%,#a4a4a4);"></div>
<div style="position:absolute;left:1444.5px;top:828.3px;width:55.09999999999995px;height:37.5px;background:linear-gradient(#b4b4b4 0%,#a0a0a0 35%,#8a8a8a 65%,#6e6e6e 100%);"></div>
<div style="position:absolute;left:1460.2px;top:834.5px;width:25px;height:25px;border-radius:50%;background:radial-gradient(circle at 50% 25%,#7c7c7c,#8c8c8c 55%,#a4a4a4);"></div>
<div style="position:absolute;left:1500.8px;top:828.3px;width:55.400000000000134px;height:37.5px;background:linear-gradient(#b4b4b4 0%,#a0a0a0 35%,#8a8a8a 65%,#6e6e6e 100%);"></div>
<div style="position:absolute;left:1516.6px;top:834.5px;width:25px;height:25px;border-radius:50%;background:radial-gradient(circle at 50% 25%,#7c7c7c,#8c8c8c 55%,#a4a4a4);"></div>
<div style="position:absolute;left:1557.4px;top:828.3px;width:54.59999999999995px;height:37.5px;background:linear-gradient(#b4b4b4 0%,#a0a0a0 35%,#8a8a8a 65%,#6e6e6e 100%);"></div>
<div style="position:absolute;left:1572.8px;top:834.5px;width:25px;height:25px;border-radius:50%;background:radial-gradient(circle at 50% 25%,#7c7c7c,#8c8c8c 55%,#a4a4a4);"></div>
<div style="position:absolute;left:1387.3px;top:828.3px;width:1.2px;height:37.5px;background:#2c2c2c;"></div>
<div style="position:absolute;left:1443.3px;top:828.3px;width:1.2px;height:37.5px;background:#2c2c2c;"></div>
<div style="position:absolute;left:1499.6px;top:828.3px;width:1.2px;height:37.5px;background:#2c2c2c;"></div>
<div style="position:absolute;left:1556.2px;top:828.3px;width:1.2px;height:37.5px;background:#2c2c2c;"></div>
<div style="position:absolute;left:1329.5px;top:865.8px;width:283.7px;height:1.2px;background:#2c2c2c;"></div>
<div style="position:absolute;left:1329.5px;top:867px;width:170.1px;height:34px;background:linear-gradient(#b4b4b4 0%,#a0a0a0 35%,#8a8a8a 65%,#6e6e6e 100%);"></div>
<div style="position:absolute;left:1500.8px;top:867px;width:162.2px;height:34px;background:linear-gradient(#b4b4b4 0%,#a0a0a0 35%,#8a8a8a 65%,#6e6e6e 100%);"></div>
<div style="position:absolute;left:1499.6px;top:867px;width:1.2px;height:34px;background:#2c2c2c;"></div>
<div style="position:absolute;left:1356.2px;top:873.2px;width:25px;height:25px;border-radius:50%;background:radial-gradient(circle at 50% 25%,#7c7c7c,#8c8c8c 55%,#a4a4a4);"></div>
<div style="position:absolute;left:1623.7px;top:873.8px;width:25px;height:25px;border-radius:50%;background:radial-gradient(circle at 50% 25%,#7c7c7c,#8c8c8c 55%,#a4a4a4);"></div>
<svg width="1663" height="901" viewBox="0 0 1663 901" style="position:absolute;left:0;top:0;">
<text x="95.5" y="26.5" font-size="15" fill="#808080" text-anchor="middle" font-weight="normal">+</text>
<text x="11.3" y="25" font-size="13.5" fill="#e6e6e6" text-anchor="start" font-weight="normal" textLength="57.5" lengthAdjust="spacingAndGlyphs" stroke="#e6e6e6" stroke-width="0.34">History 1</text>
<path d="M1161.3,16 L1173.3,16 L1167.3,22.5 Z" fill="#fff"/>
<text x="1217.2" y="23" font-size="12" fill="#fff" text-anchor="middle" font-weight="normal" textLength="20" lengthAdjust="spacingAndGlyphs" stroke="#fff" stroke-width="0.30">708</text>
<text x="1069" y="14" font-size="13" fill="#eee" text-anchor="start" font-weight="normal" textLength="82" lengthAdjust="spacingAndGlyphs" stroke="#eee" stroke-width="0.33">X-Rite i1Pro 3</text>
<text x="1069" y="33" font-size="13" fill="#eee" text-anchor="start" font-weight="normal" textLength="70" lengthAdjust="spacingAndGlyphs" stroke="#eee" stroke-width="0.33">Direct View</text>
<path d="M1380.4,16 L1392.4,16 L1386.4,22.5 Z" fill="#fff"/>
<text x="1255.5" y="14" font-size="13" fill="#eee" text-anchor="start" font-weight="normal" textLength="80" lengthAdjust="spacingAndGlyphs" stroke="#eee" stroke-width="0.33">Mobile Forge</text>
<path d="M1566.8,16 L1578.8,16 L1572.8,22.5 Z" fill="#fff"/>
<text x="1425.5" y="14" font-size="13" fill="#eee" text-anchor="start" font-weight="normal" textLength="131" lengthAdjust="spacingAndGlyphs" stroke="#eee" stroke-width="0.33">Direct Display Control</text>
<g transform="translate(1618,17.3)" fill="#e2e2e2"><circle r="5.6" fill="none" stroke="#e2e2e2" stroke-width="2.6"/><rect x="-1.6" y="-8.3" width="3.2" height="4" transform="rotate(0)"/><rect x="-1.6" y="-8.3" width="3.2" height="4" transform="rotate(45)"/><rect x="-1.6" y="-8.3" width="3.2" height="4" transform="rotate(90)"/><rect x="-1.6" y="-8.3" width="3.2" height="4" transform="rotate(135)"/><rect x="-1.6" y="-8.3" width="3.2" height="4" transform="rotate(180)"/><rect x="-1.6" y="-8.3" width="3.2" height="4" transform="rotate(225)"/><rect x="-1.6" y="-8.3" width="3.2" height="4" transform="rotate(270)"/><rect x="-1.6" y="-8.3" width="3.2" height="4" transform="rotate(315)"/></g>
<path d="M1660,10 L1653,16.7 L1660,23.3 Z" fill="#fff"/>
<text x="54.8" y="93.8" font-size="36" fill="#f2f2f2" text-anchor="start" font-weight="normal" textLength="216" lengthAdjust="spacingAndGlyphs" stroke="#f2f2f2" stroke-width="0.90">Color Gamut</text>
<text x="212.6" y="143.1" font-size="14" fill="#cfcfcf" text-anchor="middle" font-weight="normal" textLength="76.5" lengthAdjust="spacingAndGlyphs" stroke="#cfcfcf" stroke-width="0.35">DeltaE 2000</text>
<text x="50.5" y="568.6" font-size="13" fill="#d4d4d4" text-anchor="middle" font-weight="normal" stroke="#d4d4d4" stroke-width="0.33">0</text>
<text x="92.5" y="568.6" font-size="13" fill="#d4d4d4" text-anchor="middle" font-weight="normal" stroke="#d4d4d4" stroke-width="0.33">2</text>
<text x="136.5" y="568.6" font-size="13" fill="#d4d4d4" text-anchor="middle" font-weight="normal" stroke="#d4d4d4" stroke-width="0.33">4</text>
<text x="179.5" y="568.6" font-size="13" fill="#d4d4d4" text-anchor="middle" font-weight="normal" stroke="#d4d4d4" stroke-width="0.33">6</text>
<text x="223.5" y="568.6" font-size="13" fill="#d4d4d4" text-anchor="middle" font-weight="normal" stroke="#d4d4d4" stroke-width="0.33">8</text>
<text x="266.5" y="568.6" font-size="13" fill="#d4d4d4" text-anchor="middle" font-weight="normal" stroke="#d4d4d4" stroke-width="0.33">10</text>
<text x="308.5" y="568.6" font-size="13" fill="#d4d4d4" text-anchor="middle" font-weight="normal" stroke="#d4d4d4" stroke-width="0.33">12</text>
<text x="352.5" y="568.6" font-size="13" fill="#d4d4d4" text-anchor="middle" font-weight="normal" stroke="#d4d4d4" stroke-width="0.33">14</text>
<text x="420.7" y="88.6" font-size="14" fill="#d4d4d4" text-anchor="end" font-weight="normal" stroke="#d4d4d4" stroke-width="0.35">15</text>
<text x="420.7" y="139.6" font-size="14" fill="#d4d4d4" text-anchor="end" font-weight="normal" stroke="#d4d4d4" stroke-width="0.35">10</text>
<text x="420.7" y="190.6" font-size="14" fill="#d4d4d4" text-anchor="end" font-weight="normal" stroke="#d4d4d4" stroke-width="0.35">5</text>
<text x="420.7" y="241.6" font-size="14" fill="#d4d4d4" text-anchor="end" font-weight="normal" stroke="#d4d4d4" stroke-width="0.35">0</text>
<text x="420.7" y="292.6" font-size="14" fill="#d4d4d4" text-anchor="end" font-weight="normal" stroke="#d4d4d4" stroke-width="0.35">-5</text>
<text x="420.7" y="343.6" font-size="14" fill="#d4d4d4" text-anchor="end" font-weight="normal" stroke="#d4d4d4" stroke-width="0.35">-10</text>
<text x="420.7" y="394.6" font-size="14" fill="#d4d4d4" text-anchor="end" font-weight="normal" stroke="#d4d4d4" stroke-width="0.35">-15</text>
<text x="495.5" y="404" font-size="14" fill="#d4d4d4" text-anchor="middle" font-weight="normal" textLength="37" lengthAdjust="spacingAndGlyphs" stroke="#d4d4d4" stroke-width="0.35">100W</text>
<text x="482" y="77.1" font-size="14" fill="#d4d4d4" text-anchor="middle" font-weight="normal" stroke="#d4d4d4" stroke-width="0.35">DeltaL</text>
<text x="611.7" y="88.6" font-size="14" fill="#d4d4d4" text-anchor="end" font-weight="normal" stroke="#d4d4d4" stroke-width="0.35">15</text>
<text x="611.7" y="139.6" font-size="14" fill="#d4d4d4" text-anchor="end" font-weight="normal" stroke="#d4d4d4" stroke-width="0.35">10</text>
<text x="611.7" y="190.6" font-size="14" fill="#d4d4d4" text-anchor="end" font-weight="normal" stroke="#d4d4d4" stroke-width="0.35">5</text>
<text x="611.7" y="241.6" font-size="14" fill="#d4d4d4" text-anchor="end" font-weight="normal" stroke="#d4d4d4" stroke-width="0.35">0</text>
<text x="611.7" y="292.6" font-size="14" fill="#d4d4d4" text-anchor="end" font-weight="normal" stroke="#d4d4d4" stroke-width="0.35">-5</text>
<text x="611.7" y="343.6" font-size="14" fill="#d4d4d4" text-anchor="end" font-weight="normal" stroke="#d4d4d4" stroke-width="0.35">-10</text>
<text x="611.7" y="394.6" font-size="14" fill="#d4d4d4" text-anchor="end" font-weight="normal" stroke="#d4d4d4" stroke-width="0.35">-15</text>
<text x="686.5" y="404" font-size="14" fill="#d4d4d4" text-anchor="middle" font-weight="normal" textLength="37" lengthAdjust="spacingAndGlyphs" stroke="#d4d4d4" stroke-width="0.35">100W</text>
<text x="673" y="77.1" font-size="14" fill="#d4d4d4" text-anchor="middle" font-weight="normal" stroke="#d4d4d4" stroke-width="0.35">DeltaC</text>
<text x="802.7" y="88.6" font-size="14" fill="#d4d4d4" text-anchor="end" font-weight="normal" stroke="#d4d4d4" stroke-width="0.35">15</text>
<text x="802.7" y="139.6" font-size="14" fill="#d4d4d4" text-anchor="end" font-weight="normal" stroke="#d4d4d4" stroke-width="0.35">10</text>
<text x="802.7" y="190.6" font-size="14" fill="#d4d4d4" text-anchor="end" font-weight="normal" stroke="#d4d4d4" stroke-width="0.35">5</text>
<text x="802.7" y="241.6" font-size="14" fill="#d4d4d4" text-anchor="end" font-weight="normal" stroke="#d4d4d4" stroke-width="0.35">0</text>
<text x="802.7" y="292.6" font-size="14" fill="#d4d4d4" text-anchor="end" font-weight="normal" stroke="#d4d4d4" stroke-width="0.35">-5</text>
<text x="802.7" y="343.6" font-size="14" fill="#d4d4d4" text-anchor="end" font-weight="normal" stroke="#d4d4d4" stroke-width="0.35">-10</text>
<text x="802.7" y="394.6" font-size="14" fill="#d4d4d4" text-anchor="end" font-weight="normal" stroke="#d4d4d4" stroke-width="0.35">-15</text>
<text x="877.5" y="404" font-size="14" fill="#d4d4d4" text-anchor="middle" font-weight="normal" textLength="37" lengthAdjust="spacingAndGlyphs" stroke="#d4d4d4" stroke-width="0.35">100W</text>
<text x="864" y="77.1" font-size="14" fill="#d4d4d4" text-anchor="middle" font-weight="normal" stroke="#d4d4d4" stroke-width="0.35">DeltaH</text>
<text x="441.5" y="570" font-size="11.5" fill="#f0f0f0" text-anchor="middle" font-weight="normal" stroke="#f0f0f0" stroke-width="0.29">White</text>
<text x="511.5" y="570" font-size="11.5" fill="#f0f0f0" text-anchor="middle" font-weight="normal" stroke="#f0f0f0" stroke-width="0.29">Red</text>
<text x="581.5" y="570" font-size="11.5" fill="#f0f0f0" text-anchor="middle" font-weight="normal" stroke="#f0f0f0" stroke-width="0.29">Green</text>
<text x="650.5" y="570" font-size="11.5" fill="#f0f0f0" text-anchor="middle" font-weight="normal" stroke="#f0f0f0" stroke-width="0.29">Blue</text>
<text x="720.5" y="570" font-size="11.5" fill="#f0f0f0" text-anchor="middle" font-weight="normal" stroke="#f0f0f0" stroke-width="0.29">Cyan</text>
<text x="790.5" y="570" font-size="11.5" fill="#f0f0f0" text-anchor="middle" font-weight="normal" stroke="#f0f0f0" stroke-width="0.29">Magenta</text>
<text x="860.5" y="570" font-size="11.5" fill="#f0f0f0" text-anchor="middle" font-weight="normal" stroke="#f0f0f0" stroke-width="0.29">Yellow</text>
<text x="930.5" y="570" font-size="11.5" fill="#f0f0f0" text-anchor="middle" font-weight="normal" stroke="#f0f0f0" stroke-width="0.29">100W</text>
<text transform="translate(407,472) rotate(-90)" font-size="11.5" fill="#f0f0f0" text-anchor="start" textLength="33" lengthAdjust="spacingAndGlyphs">Actual</text>
<text transform="translate(407,544) rotate(-90)" font-size="11.5" fill="#f0f0f0" text-anchor="start" textLength="33" lengthAdjust="spacingAndGlyphs">Target</text>
<text x="1308" y="76" font-size="13.5" fill="#cfcfcf" text-anchor="middle" font-weight="normal" textLength="80" lengthAdjust="spacingAndGlyphs" stroke="#cfcfcf" stroke-width="0.34">CIE 1976 u'v'</text>
<defs><clipPath id="plotclip"><rect x="1015" y="80" width="620" height="478"/></clipPath></defs>
<path d="M1280.3,543.9 L1280.3,543.9 L1280.2,543.9 L1280.1,544.0 L1280.0,544.1 L1279.9,544.1 L1279.8,544.2 L1279.7,544.2 L1279.5,544.3 L1279.4,544.3 L1279.2,544.4 L1279.0,544.4 L1278.8,544.4 L1278.6,544.4 L1278.3,544.4 L1278.0,544.4 L1277.6,544.3 L1277.1,544.2 L1276.6,544.0 L1276.1,543.8 L1275.6,543.6 L1275.1,543.3 L1274.6,543.0 L1274.1,542.7 L1273.5,542.3 L1272.9,541.8 L1272.3,541.4 L1271.6,540.9 L1270.9,540.3 L1270.1,539.7 L1269.3,539.1 L1268.4,538.3 L1267.4,537.6 L1266.4,536.7 L1265.2,535.8 L1264.1,534.9 L1262.9,533.8 L1261.7,532.8 L1260.3,531.7 L1259.0,530.5 L1257.5,529.3 L1256.0,528.0 L1254.5,526.7 L1252.8,525.3 L1251.1,523.9 L1249.2,522.4 L1247.3,520.8 L1245.2,519.1 L1243.0,517.3 L1240.7,515.4 L1238.3,513.5 L1235.9,511.5 L1233.4,509.4 L1230.8,507.2 L1228.1,505.0 L1225.2,502.5 L1222.3,499.9 L1219.2,497.2 L1216.0,494.3 L1212.6,491.3 L1209.2,488.0 L1205.6,484.5 L1202.0,481.0 L1198.2,477.2 L1194.2,473.0 L1189.8,468.3 L1185.2,463.0 L1180.3,457.3 L1175.1,451.1 L1169.7,444.5 L1164.2,437.4 L1158.5,429.8 L1152.5,421.8 L1146.4,413.3 L1140.2,404.4 L1133.9,395.1 L1127.5,385.3 L1120.9,374.9 L1114.3,364.3 L1107.6,353.4 L1101.1,342.4 L1094.6,331.2 L1088.0,319.8 L1081.6,308.3 L1075.4,296.8 L1069.5,285.5 L1064.0,274.2 L1058.7,263.0 L1053.8,251.9 L1049.1,241.1 L1044.8,230.8 L1040.8,220.8 L1037.1,211.2 L1033.8,201.9 L1030.8,193.0 L1028.0,184.7 L1025.7,176.9 L1023.7,169.6 L1022.0,162.8 L1020.6,156.4 L1019.4,150.4 L1018.5,144.9 L1017.8,139.8 L1017.4,135.1 L1017.2,130.7 L1017.3,126.6 L1017.5,122.7 L1018.0,119.2 L1018.7,116.0 L1019.5,113.0 L1020.6,110.2 L1021.8,107.7 L1023.2,105.4 L1024.8,103.3 L1026.6,101.5 L1028.5,99.8 L1030.4,98.4 L1032.6,97.2 L1034.8,96.1 L1037.2,95.3 L1039.6,94.5 L1042.1,93.9 L1044.7,93.4 L1047.4,93.1 L1050.1,92.8 L1052.9,92.5 L1055.7,92.3 L1058.6,92.2 L1061.5,92.1 L1064.4,92.1 L1067.4,92.1 L1070.3,92.0 L1073.2,92.1 L1076.1,92.1 L1079.1,92.2 L1082.1,92.2 L1085.1,92.3 L1088.1,92.5 L1091.2,92.6 L1094.2,92.8 L1097.4,93.0 L1100.6,93.2 L1103.9,93.4 L1107.2,93.6 L1110.5,93.9 L1113.9,94.1 L1117.4,94.4 L1120.9,94.7 L1124.5,95.1 L1128.2,95.4 L1131.9,95.8 L1135.7,96.1 L1139.5,96.5 L1143.5,96.9 L1147.5,97.3 L1151.6,97.8 L1155.8,98.2 L1160.1,98.7 L1164.5,99.1 L1168.9,99.6 L1173.5,100.1 L1178.1,100.6 L1182.9,101.1 L1187.7,101.7 L1192.6,102.2 L1197.7,102.8 L1202.8,103.4 L1208.1,104.0 L1213.4,104.6 L1218.9,105.2 L1224.5,105.8 L1230.1,106.5 L1235.9,107.1 L1241.8,107.8 L1247.8,108.5 L1253.9,109.2 L1260.1,109.9 L1266.4,110.7 L1272.9,111.4 L1279.4,112.1 L1286.0,112.9 L1292.7,113.7 L1299.6,114.5 L1306.5,115.3 L1313.5,116.1 L1320.6,116.9 L1327.8,117.7 L1335.1,118.5 L1342.5,119.4 L1349.9,120.2 L1357.3,121.1 L1364.8,122.0 L1372.3,122.8 L1379.9,123.7 L1387.4,124.6 L1394.9,125.4 L1401.8,126.2 L1408.1,127.0 L1414.6,127.7 L1422.1,128.6 L1431.4,129.6 L1443.2,131.0 L1456.9,132.6 L1471.6,134.2 L1486.0,135.9 L1499.0,137.4 L1510.8,138.7 L1521.9,140.0 L1532.4,141.2 L1542.4,142.4 L1551.7,143.5 L1560.3,144.4 L1568.2,145.3 L1575.5,146.2 L1582.4,147.0 L1589.0,147.7 L1595.3,148.5 L1601.1,149.1 L1606.5,149.8 L1611.6,150.3 L1616.3,150.9 L1620.4,151.4 L1623.9,151.8 L1627.2,152.1 L1630.5,152.5 L1634.3,152.9 L1639.0,153.5 L1644.5,154.1 L1649.9,154.7 L1654.6,155.3 L1657.9,155.7 Z M1480.0,142.7 L1144.5,111.3 L1196.5,431.9 Z" fill="#000" fill-opacity="0.4" fill-rule="evenodd" clip-path="url(#plotclip)"/>
<rect x="1015.5" y="80.5" width="619" height="477" fill="none" stroke="#9a9a9a" stroke-width="1"/>
<line x1="1010" y1="557.5" x2="1015.5" y2="557.5" stroke="#d4d4d4" stroke-width="1.5"/>
<text x="1008.5" y="562.5" font-size="13" fill="#d4d4d4" text-anchor="end" font-weight="normal" stroke="#d4d4d4" stroke-width="0.33">0</text>
<line x1="1010" y1="517.5" x2="1015.5" y2="517.5" stroke="#d4d4d4" stroke-width="1.5"/>
<text x="1008.5" y="522.5" font-size="13" fill="#d4d4d4" text-anchor="end" font-weight="normal" stroke="#d4d4d4" stroke-width="0.33">0,05</text>
<line x1="1010" y1="478.5" x2="1015.5" y2="478.5" stroke="#d4d4d4" stroke-width="1.5"/>
<text x="1008.5" y="483.5" font-size="13" fill="#d4d4d4" text-anchor="end" font-weight="normal" stroke="#d4d4d4" stroke-width="0.33">0,1</text>
<line x1="1010" y1="438.5" x2="1015.5" y2="438.5" stroke="#d4d4d4" stroke-width="1.5"/>
<text x="1008.5" y="443.5" font-size="13" fill="#d4d4d4" text-anchor="end" font-weight="normal" stroke="#d4d4d4" stroke-width="0.33">0,15</text>
<line x1="1010" y1="399.5" x2="1015.5" y2="399.5" stroke="#d4d4d4" stroke-width="1.5"/>
<text x="1008.5" y="404.5" font-size="13" fill="#d4d4d4" text-anchor="end" font-weight="normal" stroke="#d4d4d4" stroke-width="0.33">0,2</text>
<line x1="1010" y1="359.5" x2="1015.5" y2="359.5" stroke="#d4d4d4" stroke-width="1.5"/>
<text x="1008.5" y="364.5" font-size="13" fill="#d4d4d4" text-anchor="end" font-weight="normal" stroke="#d4d4d4" stroke-width="0.33">0,25</text>
<line x1="1010" y1="319.5" x2="1015.5" y2="319.5" stroke="#d4d4d4" stroke-width="1.5"/>
<text x="1008.5" y="324.5" font-size="13" fill="#d4d4d4" text-anchor="end" font-weight="normal" stroke="#d4d4d4" stroke-width="0.33">0,3</text>
<line x1="1010" y1="280.5" x2="1015.5" y2="280.5" stroke="#d4d4d4" stroke-width="1.5"/>
<text x="1008.5" y="285.5" font-size="13" fill="#d4d4d4" text-anchor="end" font-weight="normal" stroke="#d4d4d4" stroke-width="0.33">0,35</text>
<line x1="1010" y1="240.5" x2="1015.5" y2="240.5" stroke="#d4d4d4" stroke-width="1.5"/>
<text x="1008.5" y="245.5" font-size="13" fill="#d4d4d4" text-anchor="end" font-weight="normal" stroke="#d4d4d4" stroke-width="0.33">0,4</text>
<line x1="1010" y1="200.5" x2="1015.5" y2="200.5" stroke="#d4d4d4" stroke-width="1.5"/>
<text x="1008.5" y="205.5" font-size="13" fill="#d4d4d4" text-anchor="end" font-weight="normal" stroke="#d4d4d4" stroke-width="0.33">0,45</text>
<line x1="1010" y1="161.5" x2="1015.5" y2="161.5" stroke="#d4d4d4" stroke-width="1.5"/>
<text x="1008.5" y="166.5" font-size="13" fill="#d4d4d4" text-anchor="end" font-weight="normal" stroke="#d4d4d4" stroke-width="0.33">0,5</text>
<line x1="1010" y1="121.5" x2="1015.5" y2="121.5" stroke="#d4d4d4" stroke-width="1.5"/>
<text x="1008.5" y="126.5" font-size="13" fill="#d4d4d4" text-anchor="end" font-weight="normal" stroke="#d4d4d4" stroke-width="0.33">0,55</text>
<line x1="1016.5" y1="557.5" x2="1016.5" y2="563" stroke="#d4d4d4" stroke-width="1.5"/>
<text x="1016.5" y="577.8" font-size="13" fill="#d4d4d4" text-anchor="middle" font-weight="normal" stroke="#d4d4d4" stroke-width="0.33">0</text>
<line x1="1067.5" y1="557.5" x2="1067.5" y2="563" stroke="#d4d4d4" stroke-width="1.5"/>
<text x="1067.5" y="577.8" font-size="13" fill="#d4d4d4" text-anchor="middle" font-weight="normal" stroke="#d4d4d4" stroke-width="0.33">0,05</text>
<line x1="1119.5" y1="557.5" x2="1119.5" y2="563" stroke="#d4d4d4" stroke-width="1.5"/>
<text x="1119.5" y="577.8" font-size="13" fill="#d4d4d4" text-anchor="middle" font-weight="normal" stroke="#d4d4d4" stroke-width="0.33">0,1</text>
<line x1="1170.5" y1="557.5" x2="1170.5" y2="563" stroke="#d4d4d4" stroke-width="1.5"/>
<text x="1170.5" y="577.8" font-size="13" fill="#d4d4d4" text-anchor="middle" font-weight="normal" stroke="#d4d4d4" stroke-width="0.33">0,15</text>
<line x1="1222.5" y1="557.5" x2="1222.5" y2="563" stroke="#d4d4d4" stroke-width="1.5"/>
<text x="1222.5" y="577.8" font-size="13" fill="#d4d4d4" text-anchor="middle" font-weight="normal" stroke="#d4d4d4" stroke-width="0.33">0,2</text>
<line x1="1273.5" y1="557.5" x2="1273.5" y2="563" stroke="#d4d4d4" stroke-width="1.5"/>
<text x="1273.5" y="577.8" font-size="13" fill="#d4d4d4" text-anchor="middle" font-weight="normal" stroke="#d4d4d4" stroke-width="0.33">0,25</text>
<line x1="1325.5" y1="557.5" x2="1325.5" y2="563" stroke="#d4d4d4" stroke-width="1.5"/>
<text x="1325.5" y="577.8" font-size="13" fill="#d4d4d4" text-anchor="middle" font-weight="normal" stroke="#d4d4d4" stroke-width="0.33">0,3</text>
<line x1="1376.5" y1="557.5" x2="1376.5" y2="563" stroke="#d4d4d4" stroke-width="1.5"/>
<text x="1376.5" y="577.8" font-size="13" fill="#d4d4d4" text-anchor="middle" font-weight="normal" stroke="#d4d4d4" stroke-width="0.33">0,35</text>
<line x1="1428.5" y1="557.5" x2="1428.5" y2="563" stroke="#d4d4d4" stroke-width="1.5"/>
<text x="1428.5" y="577.8" font-size="13" fill="#d4d4d4" text-anchor="middle" font-weight="normal" stroke="#d4d4d4" stroke-width="0.33">0,4</text>
<line x1="1479.5" y1="557.5" x2="1479.5" y2="563" stroke="#d4d4d4" stroke-width="1.5"/>
<text x="1479.5" y="577.8" font-size="13" fill="#d4d4d4" text-anchor="middle" font-weight="normal" stroke="#d4d4d4" stroke-width="0.33">0,45</text>
<line x1="1531.5" y1="557.5" x2="1531.5" y2="563" stroke="#d4d4d4" stroke-width="1.5"/>
<text x="1531.5" y="577.8" font-size="13" fill="#d4d4d4" text-anchor="middle" font-weight="normal" stroke="#d4d4d4" stroke-width="0.33">0,5</text>
<line x1="1582.5" y1="557.5" x2="1582.5" y2="563" stroke="#d4d4d4" stroke-width="1.5"/>
<text x="1582.5" y="577.8" font-size="13" fill="#d4d4d4" text-anchor="middle" font-weight="normal" stroke="#d4d4d4" stroke-width="0.33">0,55</text>
<rect x="1138.0" y="104.3" width="13" height="13" fill="none" stroke="#fff" stroke-width="1.6"/>
<circle cx="1136.4" cy="111.9" r="4.3" fill="#0a8c10" stroke="#000" stroke-width="1.1"/>
<rect x="1219.3" y="111.9" width="13" height="13" fill="none" stroke="#fff" stroke-width="1.6"/>
<circle cx="1217.1" cy="119.6" r="4.3" fill="#a89c20" stroke="#000" stroke-width="1.1"/>
<rect x="1473.5" y="135.7" width="13" height="13" fill="none" stroke="#fff" stroke-width="1.6"/>
<circle cx="1480.8" cy="144.2" r="4.3" fill="#b00010" stroke="#000" stroke-width="1.1"/>
<rect x="1151.8" y="189.1" width="13" height="13" fill="none" stroke="#fff" stroke-width="1.6"/>
<circle cx="1158.5" cy="208.9" r="4.3" fill="#14a8a8" stroke="#000" stroke-width="1.1"/>
<rect x="1323.4" y="288.7" width="13" height="13" fill="none" stroke="#fff" stroke-width="1.6"/>
<circle cx="1324.4" cy="314.1" r="4.3" fill="#c010c8" stroke="#000" stroke-width="1.1"/>
<rect x="1190.0" y="424.9" width="13" height="13" fill="none" stroke="#fff" stroke-width="1.6"/>
<circle cx="1210.6" cy="435.9" r="4.3" fill="#0010c8" stroke="#000" stroke-width="1.1"/>
<circle cx="1215.7" cy="197.2" r="4.3" fill="#fff" stroke="#000" stroke-width="1.1"/>
<rect x="1213.1" y="178.9" width="13" height="13" fill="none" stroke="#000" stroke-width="2.2"/>
<text x="1388" y="545.6" font-size="18" fill="#f0f0f0" text-anchor="start" font-weight="normal" textLength="198" lengthAdjust="spacingAndGlyphs" stroke="#f0f0f0" stroke-width="0.45">Gamut Coverage:&#160; 96%</text>
<text x="45" y="655.4" font-size="29" fill="#f0f0f0" text-anchor="start" font-weight="normal" textLength="212" lengthAdjust="spacingAndGlyphs" stroke="#f0f0f0" stroke-width="0.73">Current Reading</text>
<text x="45" y="722.8" font-size="24" fill="#f0f0f0" text-anchor="start" font-weight="normal" textLength="85" lengthAdjust="spacingAndGlyphs" stroke="#f0f0f0" stroke-width="0.60">x: 0,296</text>
<text x="196" y="722.8" font-size="24" fill="#f0f0f0" text-anchor="start" font-weight="normal" textLength="73" lengthAdjust="spacingAndGlyphs" stroke="#f0f0f0" stroke-width="0.60">y: 0,31</text>
<text x="45" y="762" font-size="24" fill="#f0f0f0" text-anchor="start" font-weight="normal" textLength="107" lengthAdjust="spacingAndGlyphs" stroke="#f0f0f0" stroke-width="0.60">fL: 142,72</text>
<text x="45" y="801.5" font-size="24" fill="#f0f0f0" text-anchor="start" font-weight="normal" textLength="154" lengthAdjust="spacingAndGlyphs" stroke="#f0f0f0" stroke-width="0.60">cd/m&#178;: 488,98</text>
<text x="482.5" y="623" font-size="13.5" fill="#cfcfcf" text-anchor="middle" font-weight="normal" textLength="80" lengthAdjust="spacingAndGlyphs" stroke="#cfcfcf" stroke-width="0.34">RGB Balance</text>
<text x="366" y="664.5" font-size="13.5" fill="#d4d4d4" text-anchor="end" font-weight="normal" stroke="#d4d4d4" stroke-width="0.34">20</text>
<text x="366" y="721.5" font-size="13.5" fill="#d4d4d4" text-anchor="end" font-weight="normal" stroke="#d4d4d4" stroke-width="0.34">0</text>
<text x="366" y="779.5" font-size="13.5" fill="#d4d4d4" text-anchor="end" font-weight="normal" stroke="#d4d4d4" stroke-width="0.34">-20</text>
<text x="495.5" y="818.5" font-size="13.5" fill="#cfcfcf" text-anchor="middle" font-weight="normal" textLength="37" lengthAdjust="spacingAndGlyphs" stroke="#cfcfcf" stroke-width="0.34">100W</text>
<line x1="462" y1="716.5" x2="530" y2="716.5" stroke="#000" stroke-width="2"/>
<text x="811.5" y="616" font-size="13.5" fill="#cfcfcf" text-anchor="middle" font-weight="normal" textLength="73" lengthAdjust="spacingAndGlyphs" stroke="#cfcfcf" stroke-width="0.34">CIE 1931 xy</text>
<rect x="804.5" y="708.5" width="13" height="13" fill="#fff" stroke="#000" stroke-width="2.5"/>
<circle cx="701" cy="787.5" r="4.5" fill="#fff" stroke="#000" stroke-width="1"/>
<circle cx="695.5" cy="802.3" r="4.5" fill="#b4b4b4" stroke="#000" stroke-width="1"/>
<clipPath id="tclip"><rect x="1008" y="607" width="599" height="190.8"/></clipPath><g clip-path="url(#tclip)">
<text transform="translate(1082 632) scale(0.842 1)" font-size="19" fill="#f2f2f2" stroke="#f2f2f2" stroke-width="0.35">White</text>
<text transform="translate(1158.6 632) scale(0.842 1)" font-size="19" fill="#f2f2f2" stroke="#f2f2f2" stroke-width="0.35">Red</text>
<text transform="translate(1226 632) scale(0.842 1)" font-size="19" fill="#f2f2f2" stroke="#f2f2f2" stroke-width="0.35">Green</text>
<text transform="translate(1302.8 632) scale(0.842 1)" font-size="19" fill="#f2f2f2" stroke="#f2f2f2" stroke-width="0.35">Blue</text>
<text transform="translate(1370.4 632) scale(0.842 1)" font-size="19" fill="#f2f2f2" stroke="#f2f2f2" stroke-width="0.35">Cyan</text>
<text transform="translate(1447.3 632) scale(0.842 1)" font-size="19" fill="#f2f2f2" stroke="#f2f2f2" stroke-width="0.35">Magenta</text>
<text transform="translate(1516.1 632) scale(0.842 1)" font-size="19" fill="#f2f2f2" stroke="#f2f2f2" stroke-width="0.35">Yellow</text>
<text transform="translate(1593 632) scale(0.842 1)" font-size="19" fill="#f2f2f2" stroke="#f2f2f2" stroke-width="0.35">100W</text>
<text transform="translate(1012.3 669.4) scale(0.842 1)" font-size="19" fill="#f2f2f2" stroke="#f2f2f2" stroke-width="0.35">x: CIE31</text>
<text transform="translate(1082 669.4) scale(0.842 1)" font-size="19" fill="#f2f2f2" stroke="#f2f2f2" stroke-width="0.35">0,2952</text>
<text transform="translate(1158.6 669.4) scale(0.842 1)" font-size="19" fill="#f2f2f2" stroke="#f2f2f2" stroke-width="0.35">0,6358</text>
<text transform="translate(1226 669.4) scale(0.842 1)" font-size="19" fill="#f2f2f2" stroke="#f2f2f2" stroke-width="0.35">0,2825</text>
<text transform="translate(1302.8 669.4) scale(0.842 1)" font-size="19" fill="#f2f2f2" stroke="#f2f2f2" stroke-width="0.35">0,1590</text>
<text transform="translate(1370.4 669.4) scale(0.842 1)" font-size="19" fill="#f2f2f2" stroke="#f2f2f2" stroke-width="0.35">0,2143</text>
<text transform="translate(1447.3 669.4) scale(0.842 1)" font-size="19" fill="#f2f2f2" stroke="#f2f2f2" stroke-width="0.35">0,3027</text>
<text transform="translate(1516.1 669.4) scale(0.842 1)" font-size="19" fill="#f2f2f2" stroke="#f2f2f2" stroke-width="0.35">0,4036</text>
<text transform="translate(1593 669.4) scale(0.842 1)" font-size="19" fill="#f2f2f2" stroke="#f2f2f2" stroke-width="0.35">0,2952</text>
<text transform="translate(1012.3 704.1999999999999) scale(0.842 1)" font-size="19" fill="#f2f2f2" stroke="#f2f2f2" stroke-width="0.35">y: CIE31</text>
<text transform="translate(1082 704.1999999999999) scale(0.842 1)" font-size="19" fill="#f2f2f2" stroke="#f2f2f2" stroke-width="0.35">0,3063</text>
<text transform="translate(1158.6 704.1999999999999) scale(0.842 1)" font-size="19" fill="#f2f2f2" stroke="#f2f2f2" stroke-width="0.35">0,3254</text>
<text transform="translate(1226 704.1999999999999) scale(0.842 1)" font-size="19" fill="#f2f2f2" stroke="#f2f2f2" stroke-width="0.35">0,6013</text>
<text transform="translate(1302.8 704.1999999999999) scale(0.842 1)" font-size="19" fill="#f2f2f2" stroke="#f2f2f2" stroke-width="0.35">0,0567</text>
<text transform="translate(1370.4 704.1999999999999) scale(0.842 1)" font-size="19" fill="#f2f2f2" stroke="#f2f2f2" stroke-width="0.35">0,3014</text>
<text transform="translate(1447.3 704.1999999999999) scale(0.842 1)" font-size="19" fill="#f2f2f2" stroke="#f2f2f2" stroke-width="0.35">0,1372</text>
<text transform="translate(1516.1 704.1999999999999) scale(0.842 1)" font-size="19" fill="#f2f2f2" stroke="#f2f2f2" stroke-width="0.35">0,5058</text>
<text transform="translate(1593 704.1999999999999) scale(0.842 1)" font-size="19" fill="#f2f2f2" stroke="#f2f2f2" stroke-width="0.35">0,3063</text>
<text transform="translate(1012.3 739.0) scale(0.842 1)" font-size="19" fill="#f2f2f2" stroke="#f2f2f2" stroke-width="0.35">Y</text>
<text transform="translate(1082 739.0) scale(0.842 1)" font-size="19" fill="#f2f2f2" stroke="#f2f2f2" stroke-width="0.35">257,0398</text>
<text transform="translate(1158.6 739.0) scale(0.842 1)" font-size="19" fill="#f2f2f2" stroke="#f2f2f2" stroke-width="0.35">52,5344</text>
<text transform="translate(1226 739.0) scale(0.842 1)" font-size="19" fill="#f2f2f2" stroke="#f2f2f2" stroke-width="0.35">184,1243</text>
<text transform="translate(1302.8 739.0) scale(0.842 1)" font-size="19" fill="#f2f2f2" stroke="#f2f2f2" stroke-width="0.35">21,3308</text>
<text transform="translate(1370.4 739.0) scale(0.842 1)" font-size="19" fill="#f2f2f2" stroke="#f2f2f2" stroke-width="0.35">204,6801</text>
<text transform="translate(1447.3 739.0) scale(0.842 1)" font-size="19" fill="#f2f2f2" stroke="#f2f2f2" stroke-width="0.35">73,4502</text>
<text transform="translate(1516.1 739.0) scale(0.842 1)" font-size="19" fill="#f2f2f2" stroke="#f2f2f2" stroke-width="0.35">236,1540</text>
<text transform="translate(1593 739.0) scale(0.842 1)" font-size="19" fill="#f2f2f2" stroke="#f2f2f2" stroke-width="0.35">488,98</text>
<text transform="translate(1012.3 773.8) scale(0.842 1)" font-size="19" fill="#f2f2f2" stroke="#f2f2f2" stroke-width="0.35">Target Y</text>
<text transform="translate(1082 773.8) scale(0.842 1)" font-size="19" fill="#f2f2f2" stroke="#f2f2f2" stroke-width="0.35">257,0398</text>
<text transform="translate(1158.6 773.8) scale(0.842 1)" font-size="19" fill="#f2f2f2" stroke="#f2f2f2" stroke-width="0.35">54,6610</text>
<text transform="translate(1226 773.8) scale(0.842 1)" font-size="19" fill="#f2f2f2" stroke="#f2f2f2" stroke-width="0.35">183,8242</text>
<text transform="translate(1302.8 773.8) scale(0.842 1)" font-size="19" fill="#f2f2f2" stroke="#f2f2f2" stroke-width="0.35">18,5546</text>
<text transform="translate(1370.4 773.8) scale(0.842 1)" font-size="19" fill="#f2f2f2" stroke="#f2f2f2" stroke-width="0.35">202,3788</text>
<text transform="translate(1447.3 773.8) scale(0.842 1)" font-size="19" fill="#f2f2f2" stroke="#f2f2f2" stroke-width="0.35">73,2156</text>
<text transform="translate(1516.1 773.8) scale(0.842 1)" font-size="19" fill="#f2f2f2" stroke="#f2f2f2" stroke-width="0.35">238,4852</text>
<text transform="translate(1593 773.8) scale(0.842 1)" font-size="19" fill="#f2f2f2" stroke="#f2f2f2" stroke-width="0.35">488,98</text>
<text transform="translate(1012.3 808.5999999999999) scale(0.842 1)" font-size="19" fill="#f2f2f2" stroke="#f2f2f2" stroke-width="0.35">&#916;E 2000</text>
<text transform="translate(1082 808.5999999999999) scale(0.842 1)" font-size="19" fill="#f2f2f2" stroke="#f2f2f2" stroke-width="0.35">0,2352</text>
<text transform="translate(1158.6 808.5999999999999) scale(0.842 1)" font-size="19" fill="#f2f2f2" stroke="#f2f2f2" stroke-width="0.35">2,0680</text>
<text transform="translate(1226 808.5999999999999) scale(0.842 1)" font-size="19" fill="#f2f2f2" stroke="#f2f2f2" stroke-width="0.35">2,3384</text>
<text transform="translate(1302.8 808.5999999999999) scale(0.842 1)" font-size="19" fill="#f2f2f2" stroke="#f2f2f2" stroke-width="0.35">3,4333</text>
<text transform="translate(1370.4 808.5999999999999) scale(0.842 1)" font-size="19" fill="#f2f2f2" stroke="#f2f2f2" stroke-width="0.35">6,1808</text>
<text transform="translate(1447.3 808.5999999999999) scale(0.842 1)" font-size="19" fill="#f2f2f2" stroke="#f2f2f2" stroke-width="0.35">2,6057</text>
<text transform="translate(1516.1 808.5999999999999) scale(0.842 1)" font-size="19" fill="#f2f2f2" stroke="#f2f2f2" stroke-width="0.35">3,3806</text>
<text transform="translate(1593 808.5999999999999) scale(0.842 1)" font-size="19" fill="#f2f2f2" stroke="#f2f2f2" stroke-width="0.35">0,2352</text>
</g>
<path d="M1610.5,660 L1619.5,660 L1615,653 Z" fill="#3a3a3a"/>
<path d="M1610.5,783 L1619.5,783 L1615,790 Z" fill="#3a3a3a"/>
<path d="M1019,803 L1019,813 L1013,808 Z" fill="#3a3a3a"/>
<path d="M1595.5,803 L1595.5,813 L1601.5,808 Z" fill="#3a3a3a"/>
<text x="82.1" y="898.5" font-size="13.5" fill="#2a2a2a" text-anchor="middle" font-weight="bold">White</text>
<text x="240.0" y="898.5" font-size="13.5" fill="#2a2a2a" text-anchor="middle" font-weight="bold">Red</text>
<text x="397.9" y="898.5" font-size="13.5" fill="#2a2a2a" text-anchor="middle" font-weight="bold">Green</text>
<text x="555.8" y="898.5" font-size="13.5" fill="#2a2a2a" text-anchor="middle" font-weight="bold">Blue</text>
<text x="713.7" y="898.5" font-size="13.5" fill="#2a2a2a" text-anchor="middle" font-weight="bold">Cyan</text>
<text x="871.6" y="898.5" font-size="13.5" fill="#2a2a2a" text-anchor="middle" font-weight="bold">Magenta</text>
<text x="1029.5" y="898.5" font-size="13.5" fill="#2a2a2a" text-anchor="middle" font-weight="bold">Yellow</text>
<text x="1188" y="898.5" font-size="13.5" fill="#f4f4f4" text-anchor="middle" font-weight="bold">100W</text>
<path d="M1293.5,843 L1305.5,843 L1299.5,836 Z" fill="#262626"/>
<rect x="1354.6" y="842.4" width="9.4" height="9.4" fill="#333"/>
<path d="M1412.5,840.5 L1412.5,854 L1422.5,847.3 Z" fill="#333"/>
<g fill="none" stroke="#333" stroke-width="2"><path d="M1467.5,840 H1465.5 V855 H1467.5 M1478.5,840 H1480.5 V855 H1478.5"/></g><g fill="#333"><circle cx="1470" cy="847.5" r="1.1"/><circle cx="1473" cy="847.5" r="1.1"/><circle cx="1476" cy="847.5" r="1.1"/></g>
<path d="M1529,847 C1526,843.5 1521.5,843.5 1521.5,847 C1521.5,850.5 1526,850.5 1529,847 C1532,843.5 1536.5,843.5 1536.5,847 C1536.5,850.5 1532,850.5 1529,847 Z" fill="none" stroke="#333" stroke-width="2.4"/>
<g fill="none" stroke="#333" stroke-width="2.4"><path d="M1578.6,848.8 A6.6,6.6 0 0 1 1588.8,841.7"/><path d="M1591.8,845.8 A6.6,6.6 0 0 1 1581.6,852.9"/></g><path d="M1586.0,837.7 L1592.4,839.7 L1588.4,845.1 Z M1584.4,856.9 L1578.0,854.9 L1582.0,849.5 Z" fill="#333"/>
<g fill="none" stroke="#333" stroke-width="2.2"><path d="M1368,879.5 L1363.5,885.7 L1368,892 M1373,879.5 L1368.5,885.7 L1373,892"/><path d="M1632,880 L1636.5,886.3 L1632,892.5 M1637,880 L1641.5,886.3 L1637,892.5"/></g>
<text x="1403" y="895" font-size="26" fill="#2a2a2a" text-anchor="start" font-weight="normal" textLength="62" lengthAdjust="spacingAndGlyphs" stroke="#2a2a2a" stroke-width="0.65">Back</text>
<text x="1536.3" y="896" font-size="27" fill="#2a2a2a" text-anchor="start" font-weight="normal" textLength="64" lengthAdjust="spacingAndGlyphs" stroke="#2a2a2a" stroke-width="0.68">Next</text>
<g transform="translate(1641.5,847.2)" fill="#000" opacity="0.45"><path d="M-2.3,0 L-4,-13.8 Q-3.8,-17.2 0,-17.2 Q3.8,-17.2 4,-13.8 L2.3,0 L4,13.8 Q3.8,17.2 0,17.2 Q-3.8,17.2 -4,13.8 Z" transform="rotate(0)"/><path d="M-2.3,0 L-4,-13.8 Q-3.8,-17.2 0,-17.2 Q3.8,-17.2 4,-13.8 L2.3,0 L4,13.8 Q3.8,17.2 0,17.2 Q-3.8,17.2 -4,13.8 Z" transform="rotate(60)"/><path d="M-2.3,0 L-4,-13.8 Q-3.8,-17.2 0,-17.2 Q3.8,-17.2 4,-13.8 L2.3,0 L4,13.8 Q3.8,17.2 0,17.2 Q-3.8,17.2 -4,13.8 Z" transform="rotate(120)"/></g>
<g transform="translate(1640.3,845.6)" fill="#e00808"><path d="M-2.3,0 L-4,-13.8 Q-3.8,-17.2 0,-17.2 Q3.8,-17.2 4,-13.8 L2.3,0 L4,13.8 Q3.8,17.2 0,17.2 Q-3.8,17.2 -4,13.8 Z" transform="rotate(0)"/><path d="M-2.3,0 L-4,-13.8 Q-3.8,-17.2 0,-17.2 Q3.8,-17.2 4,-13.8 L2.3,0 L4,13.8 Q3.8,17.2 0,17.2 Q-3.8,17.2 -4,13.8 Z" transform="rotate(60)"/><path d="M-2.3,0 L-4,-13.8 Q-3.8,-17.2 0,-17.2 Q3.8,-17.2 4,-13.8 L2.3,0 L4,13.8 Q3.8,17.2 0,17.2 Q-3.8,17.2 -4,13.8 Z" transform="rotate(120)"/></g>
</svg></body></html>
